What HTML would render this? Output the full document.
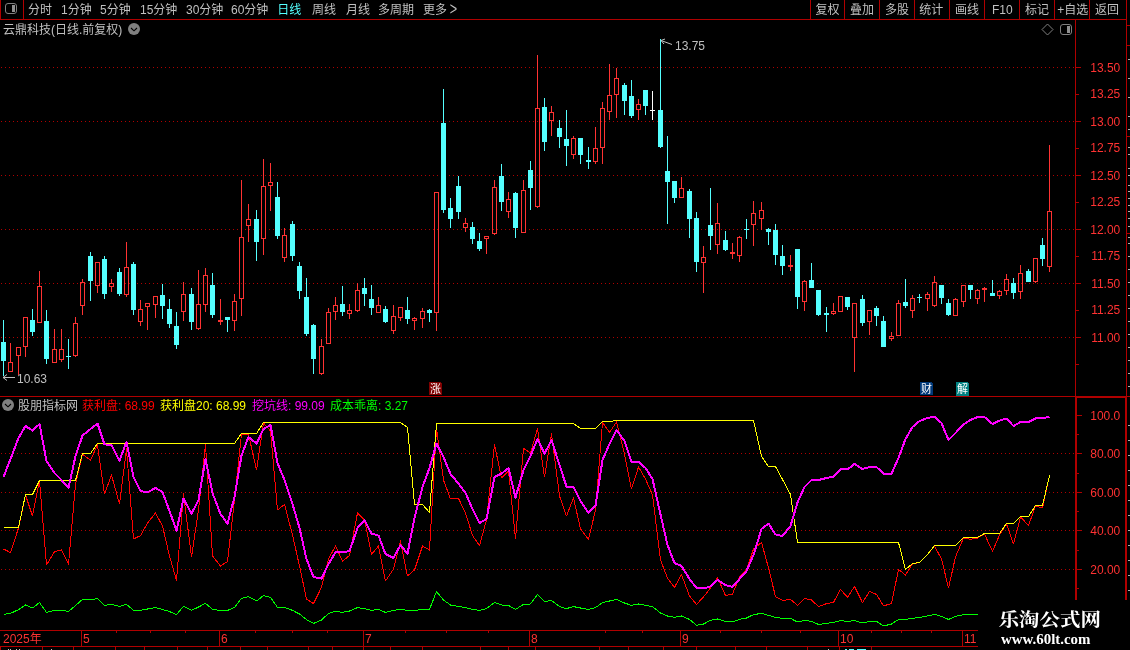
<!DOCTYPE html>
<html lang="zh"><head><meta charset="utf-8"><title>云鼎科技 日线</title>
<style>
html,body{margin:0;padding:0;background:#000}
body{width:1130px;height:650px;overflow:hidden;position:relative}
svg{position:absolute;left:0;top:0;display:block;will-change:transform}
text{font-family:"Liberation Sans","Noto Sans CJK SC",sans-serif;font-size:12px}
.cj{font-family:"Liberation Sans","Noto Sans CJK SC",sans-serif;font-size:12px;fill:#c0c0c0}
.ax{fill:#ff3232;font-size:12px}
.wm{font-family:"Liberation Serif","Noto Serif CJK SC",serif;font-weight:bold;fill:#fff}
</style></head><body>
<svg width="1130" height="650" viewBox="0 0 1130 650">
<rect width="1130" height="650" fill="#000"/>
<path shape-rendering="crispEdges" fill="#b00000" d="M1 67h1v1h-1zM5 67h1v1h-1zM9 67h1v1h-1zM13 67h1v1h-1zM17 67h1v1h-1zM21 67h1v1h-1zM25 67h1v1h-1zM29 67h1v1h-1zM33 67h1v1h-1zM37 67h1v1h-1zM41 67h1v1h-1zM45 67h1v1h-1zM49 67h1v1h-1zM53 67h1v1h-1zM57 67h1v1h-1zM61 67h1v1h-1zM65 67h1v1h-1zM69 67h1v1h-1zM73 67h1v1h-1zM77 67h1v1h-1zM81 67h1v1h-1zM85 67h1v1h-1zM89 67h1v1h-1zM93 67h1v1h-1zM97 67h1v1h-1zM101 67h1v1h-1zM105 67h1v1h-1zM109 67h1v1h-1zM113 67h1v1h-1zM117 67h1v1h-1zM121 67h1v1h-1zM125 67h1v1h-1zM129 67h1v1h-1zM133 67h1v1h-1zM137 67h1v1h-1zM141 67h1v1h-1zM145 67h1v1h-1zM149 67h1v1h-1zM153 67h1v1h-1zM157 67h1v1h-1zM161 67h1v1h-1zM165 67h1v1h-1zM169 67h1v1h-1zM173 67h1v1h-1zM177 67h1v1h-1zM181 67h1v1h-1zM185 67h1v1h-1zM189 67h1v1h-1zM193 67h1v1h-1zM197 67h1v1h-1zM201 67h1v1h-1zM205 67h1v1h-1zM209 67h1v1h-1zM213 67h1v1h-1zM217 67h1v1h-1zM221 67h1v1h-1zM225 67h1v1h-1zM229 67h1v1h-1zM233 67h1v1h-1zM237 67h1v1h-1zM241 67h1v1h-1zM245 67h1v1h-1zM249 67h1v1h-1zM253 67h1v1h-1zM257 67h1v1h-1zM261 67h1v1h-1zM265 67h1v1h-1zM269 67h1v1h-1zM273 67h1v1h-1zM277 67h1v1h-1zM281 67h1v1h-1zM285 67h1v1h-1zM289 67h1v1h-1zM293 67h1v1h-1zM297 67h1v1h-1zM301 67h1v1h-1zM305 67h1v1h-1zM309 67h1v1h-1zM313 67h1v1h-1zM317 67h1v1h-1zM321 67h1v1h-1zM325 67h1v1h-1zM329 67h1v1h-1zM333 67h1v1h-1zM337 67h1v1h-1zM341 67h1v1h-1zM345 67h1v1h-1zM349 67h1v1h-1zM353 67h1v1h-1zM357 67h1v1h-1zM361 67h1v1h-1zM365 67h1v1h-1zM369 67h1v1h-1zM373 67h1v1h-1zM377 67h1v1h-1zM381 67h1v1h-1zM385 67h1v1h-1zM389 67h1v1h-1zM393 67h1v1h-1zM397 67h1v1h-1zM401 67h1v1h-1zM405 67h1v1h-1zM409 67h1v1h-1zM413 67h1v1h-1zM417 67h1v1h-1zM421 67h1v1h-1zM425 67h1v1h-1zM429 67h1v1h-1zM433 67h1v1h-1zM437 67h1v1h-1zM441 67h1v1h-1zM445 67h1v1h-1zM449 67h1v1h-1zM453 67h1v1h-1zM457 67h1v1h-1zM461 67h1v1h-1zM465 67h1v1h-1zM469 67h1v1h-1zM473 67h1v1h-1zM477 67h1v1h-1zM481 67h1v1h-1zM485 67h1v1h-1zM489 67h1v1h-1zM493 67h1v1h-1zM497 67h1v1h-1zM501 67h1v1h-1zM505 67h1v1h-1zM509 67h1v1h-1zM513 67h1v1h-1zM517 67h1v1h-1zM521 67h1v1h-1zM525 67h1v1h-1zM529 67h1v1h-1zM533 67h1v1h-1zM537 67h1v1h-1zM541 67h1v1h-1zM545 67h1v1h-1zM549 67h1v1h-1zM553 67h1v1h-1zM557 67h1v1h-1zM561 67h1v1h-1zM565 67h1v1h-1zM569 67h1v1h-1zM573 67h1v1h-1zM577 67h1v1h-1zM581 67h1v1h-1zM585 67h1v1h-1zM589 67h1v1h-1zM593 67h1v1h-1zM597 67h1v1h-1zM601 67h1v1h-1zM605 67h1v1h-1zM609 67h1v1h-1zM613 67h1v1h-1zM617 67h1v1h-1zM621 67h1v1h-1zM625 67h1v1h-1zM629 67h1v1h-1zM633 67h1v1h-1zM637 67h1v1h-1zM641 67h1v1h-1zM645 67h1v1h-1zM649 67h1v1h-1zM653 67h1v1h-1zM657 67h1v1h-1zM661 67h1v1h-1zM665 67h1v1h-1zM669 67h1v1h-1zM673 67h1v1h-1zM677 67h1v1h-1zM681 67h1v1h-1zM685 67h1v1h-1zM689 67h1v1h-1zM693 67h1v1h-1zM697 67h1v1h-1zM701 67h1v1h-1zM705 67h1v1h-1zM709 67h1v1h-1zM713 67h1v1h-1zM717 67h1v1h-1zM721 67h1v1h-1zM725 67h1v1h-1zM729 67h1v1h-1zM733 67h1v1h-1zM737 67h1v1h-1zM741 67h1v1h-1zM745 67h1v1h-1zM749 67h1v1h-1zM753 67h1v1h-1zM757 67h1v1h-1zM761 67h1v1h-1zM765 67h1v1h-1zM769 67h1v1h-1zM773 67h1v1h-1zM777 67h1v1h-1zM781 67h1v1h-1zM785 67h1v1h-1zM789 67h1v1h-1zM793 67h1v1h-1zM797 67h1v1h-1zM801 67h1v1h-1zM805 67h1v1h-1zM809 67h1v1h-1zM813 67h1v1h-1zM817 67h1v1h-1zM821 67h1v1h-1zM825 67h1v1h-1zM829 67h1v1h-1zM833 67h1v1h-1zM837 67h1v1h-1zM841 67h1v1h-1zM845 67h1v1h-1zM849 67h1v1h-1zM853 67h1v1h-1zM857 67h1v1h-1zM861 67h1v1h-1zM865 67h1v1h-1zM869 67h1v1h-1zM873 67h1v1h-1zM877 67h1v1h-1zM881 67h1v1h-1zM885 67h1v1h-1zM889 67h1v1h-1zM893 67h1v1h-1zM897 67h1v1h-1zM901 67h1v1h-1zM905 67h1v1h-1zM909 67h1v1h-1zM913 67h1v1h-1zM917 67h1v1h-1zM921 67h1v1h-1zM925 67h1v1h-1zM929 67h1v1h-1zM933 67h1v1h-1zM937 67h1v1h-1zM941 67h1v1h-1zM945 67h1v1h-1zM949 67h1v1h-1zM953 67h1v1h-1zM957 67h1v1h-1zM961 67h1v1h-1zM965 67h1v1h-1zM969 67h1v1h-1zM973 67h1v1h-1zM977 67h1v1h-1zM981 67h1v1h-1zM985 67h1v1h-1zM989 67h1v1h-1zM993 67h1v1h-1zM997 67h1v1h-1zM1001 67h1v1h-1zM1005 67h1v1h-1zM1009 67h1v1h-1zM1013 67h1v1h-1zM1017 67h1v1h-1zM1021 67h1v1h-1zM1025 67h1v1h-1zM1029 67h1v1h-1zM1033 67h1v1h-1zM1037 67h1v1h-1zM1041 67h1v1h-1zM1045 67h1v1h-1zM1049 67h1v1h-1zM1053 67h1v1h-1zM1057 67h1v1h-1zM1061 67h1v1h-1zM1065 67h1v1h-1zM1069 67h1v1h-1zM1073 67h1v1h-1zM1 121h1v1h-1zM5 121h1v1h-1zM9 121h1v1h-1zM13 121h1v1h-1zM17 121h1v1h-1zM21 121h1v1h-1zM25 121h1v1h-1zM29 121h1v1h-1zM33 121h1v1h-1zM37 121h1v1h-1zM41 121h1v1h-1zM45 121h1v1h-1zM49 121h1v1h-1zM53 121h1v1h-1zM57 121h1v1h-1zM61 121h1v1h-1zM65 121h1v1h-1zM69 121h1v1h-1zM73 121h1v1h-1zM77 121h1v1h-1zM81 121h1v1h-1zM85 121h1v1h-1zM89 121h1v1h-1zM93 121h1v1h-1zM97 121h1v1h-1zM101 121h1v1h-1zM105 121h1v1h-1zM109 121h1v1h-1zM113 121h1v1h-1zM117 121h1v1h-1zM121 121h1v1h-1zM125 121h1v1h-1zM129 121h1v1h-1zM133 121h1v1h-1zM137 121h1v1h-1zM141 121h1v1h-1zM145 121h1v1h-1zM149 121h1v1h-1zM153 121h1v1h-1zM157 121h1v1h-1zM161 121h1v1h-1zM165 121h1v1h-1zM169 121h1v1h-1zM173 121h1v1h-1zM177 121h1v1h-1zM181 121h1v1h-1zM185 121h1v1h-1zM189 121h1v1h-1zM193 121h1v1h-1zM197 121h1v1h-1zM201 121h1v1h-1zM205 121h1v1h-1zM209 121h1v1h-1zM213 121h1v1h-1zM217 121h1v1h-1zM221 121h1v1h-1zM225 121h1v1h-1zM229 121h1v1h-1zM233 121h1v1h-1zM237 121h1v1h-1zM241 121h1v1h-1zM245 121h1v1h-1zM249 121h1v1h-1zM253 121h1v1h-1zM257 121h1v1h-1zM261 121h1v1h-1zM265 121h1v1h-1zM269 121h1v1h-1zM273 121h1v1h-1zM277 121h1v1h-1zM281 121h1v1h-1zM285 121h1v1h-1zM289 121h1v1h-1zM293 121h1v1h-1zM297 121h1v1h-1zM301 121h1v1h-1zM305 121h1v1h-1zM309 121h1v1h-1zM313 121h1v1h-1zM317 121h1v1h-1zM321 121h1v1h-1zM325 121h1v1h-1zM329 121h1v1h-1zM333 121h1v1h-1zM337 121h1v1h-1zM341 121h1v1h-1zM345 121h1v1h-1zM349 121h1v1h-1zM353 121h1v1h-1zM357 121h1v1h-1zM361 121h1v1h-1zM365 121h1v1h-1zM369 121h1v1h-1zM373 121h1v1h-1zM377 121h1v1h-1zM381 121h1v1h-1zM385 121h1v1h-1zM389 121h1v1h-1zM393 121h1v1h-1zM397 121h1v1h-1zM401 121h1v1h-1zM405 121h1v1h-1zM409 121h1v1h-1zM413 121h1v1h-1zM417 121h1v1h-1zM421 121h1v1h-1zM425 121h1v1h-1zM429 121h1v1h-1zM433 121h1v1h-1zM437 121h1v1h-1zM441 121h1v1h-1zM445 121h1v1h-1zM449 121h1v1h-1zM453 121h1v1h-1zM457 121h1v1h-1zM461 121h1v1h-1zM465 121h1v1h-1zM469 121h1v1h-1zM473 121h1v1h-1zM477 121h1v1h-1zM481 121h1v1h-1zM485 121h1v1h-1zM489 121h1v1h-1zM493 121h1v1h-1zM497 121h1v1h-1zM501 121h1v1h-1zM505 121h1v1h-1zM509 121h1v1h-1zM513 121h1v1h-1zM517 121h1v1h-1zM521 121h1v1h-1zM525 121h1v1h-1zM529 121h1v1h-1zM533 121h1v1h-1zM537 121h1v1h-1zM541 121h1v1h-1zM545 121h1v1h-1zM549 121h1v1h-1zM553 121h1v1h-1zM557 121h1v1h-1zM561 121h1v1h-1zM565 121h1v1h-1zM569 121h1v1h-1zM573 121h1v1h-1zM577 121h1v1h-1zM581 121h1v1h-1zM585 121h1v1h-1zM589 121h1v1h-1zM593 121h1v1h-1zM597 121h1v1h-1zM601 121h1v1h-1zM605 121h1v1h-1zM609 121h1v1h-1zM613 121h1v1h-1zM617 121h1v1h-1zM621 121h1v1h-1zM625 121h1v1h-1zM629 121h1v1h-1zM633 121h1v1h-1zM637 121h1v1h-1zM641 121h1v1h-1zM645 121h1v1h-1zM649 121h1v1h-1zM653 121h1v1h-1zM657 121h1v1h-1zM661 121h1v1h-1zM665 121h1v1h-1zM669 121h1v1h-1zM673 121h1v1h-1zM677 121h1v1h-1zM681 121h1v1h-1zM685 121h1v1h-1zM689 121h1v1h-1zM693 121h1v1h-1zM697 121h1v1h-1zM701 121h1v1h-1zM705 121h1v1h-1zM709 121h1v1h-1zM713 121h1v1h-1zM717 121h1v1h-1zM721 121h1v1h-1zM725 121h1v1h-1zM729 121h1v1h-1zM733 121h1v1h-1zM737 121h1v1h-1zM741 121h1v1h-1zM745 121h1v1h-1zM749 121h1v1h-1zM753 121h1v1h-1zM757 121h1v1h-1zM761 121h1v1h-1zM765 121h1v1h-1zM769 121h1v1h-1zM773 121h1v1h-1zM777 121h1v1h-1zM781 121h1v1h-1zM785 121h1v1h-1zM789 121h1v1h-1zM793 121h1v1h-1zM797 121h1v1h-1zM801 121h1v1h-1zM805 121h1v1h-1zM809 121h1v1h-1zM813 121h1v1h-1zM817 121h1v1h-1zM821 121h1v1h-1zM825 121h1v1h-1zM829 121h1v1h-1zM833 121h1v1h-1zM837 121h1v1h-1zM841 121h1v1h-1zM845 121h1v1h-1zM849 121h1v1h-1zM853 121h1v1h-1zM857 121h1v1h-1zM861 121h1v1h-1zM865 121h1v1h-1zM869 121h1v1h-1zM873 121h1v1h-1zM877 121h1v1h-1zM881 121h1v1h-1zM885 121h1v1h-1zM889 121h1v1h-1zM893 121h1v1h-1zM897 121h1v1h-1zM901 121h1v1h-1zM905 121h1v1h-1zM909 121h1v1h-1zM913 121h1v1h-1zM917 121h1v1h-1zM921 121h1v1h-1zM925 121h1v1h-1zM929 121h1v1h-1zM933 121h1v1h-1zM937 121h1v1h-1zM941 121h1v1h-1zM945 121h1v1h-1zM949 121h1v1h-1zM953 121h1v1h-1zM957 121h1v1h-1zM961 121h1v1h-1zM965 121h1v1h-1zM969 121h1v1h-1zM973 121h1v1h-1zM977 121h1v1h-1zM981 121h1v1h-1zM985 121h1v1h-1zM989 121h1v1h-1zM993 121h1v1h-1zM997 121h1v1h-1zM1001 121h1v1h-1zM1005 121h1v1h-1zM1009 121h1v1h-1zM1013 121h1v1h-1zM1017 121h1v1h-1zM1021 121h1v1h-1zM1025 121h1v1h-1zM1029 121h1v1h-1zM1033 121h1v1h-1zM1037 121h1v1h-1zM1041 121h1v1h-1zM1045 121h1v1h-1zM1049 121h1v1h-1zM1053 121h1v1h-1zM1057 121h1v1h-1zM1061 121h1v1h-1zM1065 121h1v1h-1zM1069 121h1v1h-1zM1073 121h1v1h-1zM1 175h1v1h-1zM5 175h1v1h-1zM9 175h1v1h-1zM13 175h1v1h-1zM17 175h1v1h-1zM21 175h1v1h-1zM25 175h1v1h-1zM29 175h1v1h-1zM33 175h1v1h-1zM37 175h1v1h-1zM41 175h1v1h-1zM45 175h1v1h-1zM49 175h1v1h-1zM53 175h1v1h-1zM57 175h1v1h-1zM61 175h1v1h-1zM65 175h1v1h-1zM69 175h1v1h-1zM73 175h1v1h-1zM77 175h1v1h-1zM81 175h1v1h-1zM85 175h1v1h-1zM89 175h1v1h-1zM93 175h1v1h-1zM97 175h1v1h-1zM101 175h1v1h-1zM105 175h1v1h-1zM109 175h1v1h-1zM113 175h1v1h-1zM117 175h1v1h-1zM121 175h1v1h-1zM125 175h1v1h-1zM129 175h1v1h-1zM133 175h1v1h-1zM137 175h1v1h-1zM141 175h1v1h-1zM145 175h1v1h-1zM149 175h1v1h-1zM153 175h1v1h-1zM157 175h1v1h-1zM161 175h1v1h-1zM165 175h1v1h-1zM169 175h1v1h-1zM173 175h1v1h-1zM177 175h1v1h-1zM181 175h1v1h-1zM185 175h1v1h-1zM189 175h1v1h-1zM193 175h1v1h-1zM197 175h1v1h-1zM201 175h1v1h-1zM205 175h1v1h-1zM209 175h1v1h-1zM213 175h1v1h-1zM217 175h1v1h-1zM221 175h1v1h-1zM225 175h1v1h-1zM229 175h1v1h-1zM233 175h1v1h-1zM237 175h1v1h-1zM241 175h1v1h-1zM245 175h1v1h-1zM249 175h1v1h-1zM253 175h1v1h-1zM257 175h1v1h-1zM261 175h1v1h-1zM265 175h1v1h-1zM269 175h1v1h-1zM273 175h1v1h-1zM277 175h1v1h-1zM281 175h1v1h-1zM285 175h1v1h-1zM289 175h1v1h-1zM293 175h1v1h-1zM297 175h1v1h-1zM301 175h1v1h-1zM305 175h1v1h-1zM309 175h1v1h-1zM313 175h1v1h-1zM317 175h1v1h-1zM321 175h1v1h-1zM325 175h1v1h-1zM329 175h1v1h-1zM333 175h1v1h-1zM337 175h1v1h-1zM341 175h1v1h-1zM345 175h1v1h-1zM349 175h1v1h-1zM353 175h1v1h-1zM357 175h1v1h-1zM361 175h1v1h-1zM365 175h1v1h-1zM369 175h1v1h-1zM373 175h1v1h-1zM377 175h1v1h-1zM381 175h1v1h-1zM385 175h1v1h-1zM389 175h1v1h-1zM393 175h1v1h-1zM397 175h1v1h-1zM401 175h1v1h-1zM405 175h1v1h-1zM409 175h1v1h-1zM413 175h1v1h-1zM417 175h1v1h-1zM421 175h1v1h-1zM425 175h1v1h-1zM429 175h1v1h-1zM433 175h1v1h-1zM437 175h1v1h-1zM441 175h1v1h-1zM445 175h1v1h-1zM449 175h1v1h-1zM453 175h1v1h-1zM457 175h1v1h-1zM461 175h1v1h-1zM465 175h1v1h-1zM469 175h1v1h-1zM473 175h1v1h-1zM477 175h1v1h-1zM481 175h1v1h-1zM485 175h1v1h-1zM489 175h1v1h-1zM493 175h1v1h-1zM497 175h1v1h-1zM501 175h1v1h-1zM505 175h1v1h-1zM509 175h1v1h-1zM513 175h1v1h-1zM517 175h1v1h-1zM521 175h1v1h-1zM525 175h1v1h-1zM529 175h1v1h-1zM533 175h1v1h-1zM537 175h1v1h-1zM541 175h1v1h-1zM545 175h1v1h-1zM549 175h1v1h-1zM553 175h1v1h-1zM557 175h1v1h-1zM561 175h1v1h-1zM565 175h1v1h-1zM569 175h1v1h-1zM573 175h1v1h-1zM577 175h1v1h-1zM581 175h1v1h-1zM585 175h1v1h-1zM589 175h1v1h-1zM593 175h1v1h-1zM597 175h1v1h-1zM601 175h1v1h-1zM605 175h1v1h-1zM609 175h1v1h-1zM613 175h1v1h-1zM617 175h1v1h-1zM621 175h1v1h-1zM625 175h1v1h-1zM629 175h1v1h-1zM633 175h1v1h-1zM637 175h1v1h-1zM641 175h1v1h-1zM645 175h1v1h-1zM649 175h1v1h-1zM653 175h1v1h-1zM657 175h1v1h-1zM661 175h1v1h-1zM665 175h1v1h-1zM669 175h1v1h-1zM673 175h1v1h-1zM677 175h1v1h-1zM681 175h1v1h-1zM685 175h1v1h-1zM689 175h1v1h-1zM693 175h1v1h-1zM697 175h1v1h-1zM701 175h1v1h-1zM705 175h1v1h-1zM709 175h1v1h-1zM713 175h1v1h-1zM717 175h1v1h-1zM721 175h1v1h-1zM725 175h1v1h-1zM729 175h1v1h-1zM733 175h1v1h-1zM737 175h1v1h-1zM741 175h1v1h-1zM745 175h1v1h-1zM749 175h1v1h-1zM753 175h1v1h-1zM757 175h1v1h-1zM761 175h1v1h-1zM765 175h1v1h-1zM769 175h1v1h-1zM773 175h1v1h-1zM777 175h1v1h-1zM781 175h1v1h-1zM785 175h1v1h-1zM789 175h1v1h-1zM793 175h1v1h-1zM797 175h1v1h-1zM801 175h1v1h-1zM805 175h1v1h-1zM809 175h1v1h-1zM813 175h1v1h-1zM817 175h1v1h-1zM821 175h1v1h-1zM825 175h1v1h-1zM829 175h1v1h-1zM833 175h1v1h-1zM837 175h1v1h-1zM841 175h1v1h-1zM845 175h1v1h-1zM849 175h1v1h-1zM853 175h1v1h-1zM857 175h1v1h-1zM861 175h1v1h-1zM865 175h1v1h-1zM869 175h1v1h-1zM873 175h1v1h-1zM877 175h1v1h-1zM881 175h1v1h-1zM885 175h1v1h-1zM889 175h1v1h-1zM893 175h1v1h-1zM897 175h1v1h-1zM901 175h1v1h-1zM905 175h1v1h-1zM909 175h1v1h-1zM913 175h1v1h-1zM917 175h1v1h-1zM921 175h1v1h-1zM925 175h1v1h-1zM929 175h1v1h-1zM933 175h1v1h-1zM937 175h1v1h-1zM941 175h1v1h-1zM945 175h1v1h-1zM949 175h1v1h-1zM953 175h1v1h-1zM957 175h1v1h-1zM961 175h1v1h-1zM965 175h1v1h-1zM969 175h1v1h-1zM973 175h1v1h-1zM977 175h1v1h-1zM981 175h1v1h-1zM985 175h1v1h-1zM989 175h1v1h-1zM993 175h1v1h-1zM997 175h1v1h-1zM1001 175h1v1h-1zM1005 175h1v1h-1zM1009 175h1v1h-1zM1013 175h1v1h-1zM1017 175h1v1h-1zM1021 175h1v1h-1zM1025 175h1v1h-1zM1029 175h1v1h-1zM1033 175h1v1h-1zM1037 175h1v1h-1zM1041 175h1v1h-1zM1045 175h1v1h-1zM1049 175h1v1h-1zM1053 175h1v1h-1zM1057 175h1v1h-1zM1061 175h1v1h-1zM1065 175h1v1h-1zM1069 175h1v1h-1zM1073 175h1v1h-1zM1 229h1v1h-1zM5 229h1v1h-1zM9 229h1v1h-1zM13 229h1v1h-1zM17 229h1v1h-1zM21 229h1v1h-1zM25 229h1v1h-1zM29 229h1v1h-1zM33 229h1v1h-1zM37 229h1v1h-1zM41 229h1v1h-1zM45 229h1v1h-1zM49 229h1v1h-1zM53 229h1v1h-1zM57 229h1v1h-1zM61 229h1v1h-1zM65 229h1v1h-1zM69 229h1v1h-1zM73 229h1v1h-1zM77 229h1v1h-1zM81 229h1v1h-1zM85 229h1v1h-1zM89 229h1v1h-1zM93 229h1v1h-1zM97 229h1v1h-1zM101 229h1v1h-1zM105 229h1v1h-1zM109 229h1v1h-1zM113 229h1v1h-1zM117 229h1v1h-1zM121 229h1v1h-1zM125 229h1v1h-1zM129 229h1v1h-1zM133 229h1v1h-1zM137 229h1v1h-1zM141 229h1v1h-1zM145 229h1v1h-1zM149 229h1v1h-1zM153 229h1v1h-1zM157 229h1v1h-1zM161 229h1v1h-1zM165 229h1v1h-1zM169 229h1v1h-1zM173 229h1v1h-1zM177 229h1v1h-1zM181 229h1v1h-1zM185 229h1v1h-1zM189 229h1v1h-1zM193 229h1v1h-1zM197 229h1v1h-1zM201 229h1v1h-1zM205 229h1v1h-1zM209 229h1v1h-1zM213 229h1v1h-1zM217 229h1v1h-1zM221 229h1v1h-1zM225 229h1v1h-1zM229 229h1v1h-1zM233 229h1v1h-1zM237 229h1v1h-1zM241 229h1v1h-1zM245 229h1v1h-1zM249 229h1v1h-1zM253 229h1v1h-1zM257 229h1v1h-1zM261 229h1v1h-1zM265 229h1v1h-1zM269 229h1v1h-1zM273 229h1v1h-1zM277 229h1v1h-1zM281 229h1v1h-1zM285 229h1v1h-1zM289 229h1v1h-1zM293 229h1v1h-1zM297 229h1v1h-1zM301 229h1v1h-1zM305 229h1v1h-1zM309 229h1v1h-1zM313 229h1v1h-1zM317 229h1v1h-1zM321 229h1v1h-1zM325 229h1v1h-1zM329 229h1v1h-1zM333 229h1v1h-1zM337 229h1v1h-1zM341 229h1v1h-1zM345 229h1v1h-1zM349 229h1v1h-1zM353 229h1v1h-1zM357 229h1v1h-1zM361 229h1v1h-1zM365 229h1v1h-1zM369 229h1v1h-1zM373 229h1v1h-1zM377 229h1v1h-1zM381 229h1v1h-1zM385 229h1v1h-1zM389 229h1v1h-1zM393 229h1v1h-1zM397 229h1v1h-1zM401 229h1v1h-1zM405 229h1v1h-1zM409 229h1v1h-1zM413 229h1v1h-1zM417 229h1v1h-1zM421 229h1v1h-1zM425 229h1v1h-1zM429 229h1v1h-1zM433 229h1v1h-1zM437 229h1v1h-1zM441 229h1v1h-1zM445 229h1v1h-1zM449 229h1v1h-1zM453 229h1v1h-1zM457 229h1v1h-1zM461 229h1v1h-1zM465 229h1v1h-1zM469 229h1v1h-1zM473 229h1v1h-1zM477 229h1v1h-1zM481 229h1v1h-1zM485 229h1v1h-1zM489 229h1v1h-1zM493 229h1v1h-1zM497 229h1v1h-1zM501 229h1v1h-1zM505 229h1v1h-1zM509 229h1v1h-1zM513 229h1v1h-1zM517 229h1v1h-1zM521 229h1v1h-1zM525 229h1v1h-1zM529 229h1v1h-1zM533 229h1v1h-1zM537 229h1v1h-1zM541 229h1v1h-1zM545 229h1v1h-1zM549 229h1v1h-1zM553 229h1v1h-1zM557 229h1v1h-1zM561 229h1v1h-1zM565 229h1v1h-1zM569 229h1v1h-1zM573 229h1v1h-1zM577 229h1v1h-1zM581 229h1v1h-1zM585 229h1v1h-1zM589 229h1v1h-1zM593 229h1v1h-1zM597 229h1v1h-1zM601 229h1v1h-1zM605 229h1v1h-1zM609 229h1v1h-1zM613 229h1v1h-1zM617 229h1v1h-1zM621 229h1v1h-1zM625 229h1v1h-1zM629 229h1v1h-1zM633 229h1v1h-1zM637 229h1v1h-1zM641 229h1v1h-1zM645 229h1v1h-1zM649 229h1v1h-1zM653 229h1v1h-1zM657 229h1v1h-1zM661 229h1v1h-1zM665 229h1v1h-1zM669 229h1v1h-1zM673 229h1v1h-1zM677 229h1v1h-1zM681 229h1v1h-1zM685 229h1v1h-1zM689 229h1v1h-1zM693 229h1v1h-1zM697 229h1v1h-1zM701 229h1v1h-1zM705 229h1v1h-1zM709 229h1v1h-1zM713 229h1v1h-1zM717 229h1v1h-1zM721 229h1v1h-1zM725 229h1v1h-1zM729 229h1v1h-1zM733 229h1v1h-1zM737 229h1v1h-1zM741 229h1v1h-1zM745 229h1v1h-1zM749 229h1v1h-1zM753 229h1v1h-1zM757 229h1v1h-1zM761 229h1v1h-1zM765 229h1v1h-1zM769 229h1v1h-1zM773 229h1v1h-1zM777 229h1v1h-1zM781 229h1v1h-1zM785 229h1v1h-1zM789 229h1v1h-1zM793 229h1v1h-1zM797 229h1v1h-1zM801 229h1v1h-1zM805 229h1v1h-1zM809 229h1v1h-1zM813 229h1v1h-1zM817 229h1v1h-1zM821 229h1v1h-1zM825 229h1v1h-1zM829 229h1v1h-1zM833 229h1v1h-1zM837 229h1v1h-1zM841 229h1v1h-1zM845 229h1v1h-1zM849 229h1v1h-1zM853 229h1v1h-1zM857 229h1v1h-1zM861 229h1v1h-1zM865 229h1v1h-1zM869 229h1v1h-1zM873 229h1v1h-1zM877 229h1v1h-1zM881 229h1v1h-1zM885 229h1v1h-1zM889 229h1v1h-1zM893 229h1v1h-1zM897 229h1v1h-1zM901 229h1v1h-1zM905 229h1v1h-1zM909 229h1v1h-1zM913 229h1v1h-1zM917 229h1v1h-1zM921 229h1v1h-1zM925 229h1v1h-1zM929 229h1v1h-1zM933 229h1v1h-1zM937 229h1v1h-1zM941 229h1v1h-1zM945 229h1v1h-1zM949 229h1v1h-1zM953 229h1v1h-1zM957 229h1v1h-1zM961 229h1v1h-1zM965 229h1v1h-1zM969 229h1v1h-1zM973 229h1v1h-1zM977 229h1v1h-1zM981 229h1v1h-1zM985 229h1v1h-1zM989 229h1v1h-1zM993 229h1v1h-1zM997 229h1v1h-1zM1001 229h1v1h-1zM1005 229h1v1h-1zM1009 229h1v1h-1zM1013 229h1v1h-1zM1017 229h1v1h-1zM1021 229h1v1h-1zM1025 229h1v1h-1zM1029 229h1v1h-1zM1033 229h1v1h-1zM1037 229h1v1h-1zM1041 229h1v1h-1zM1045 229h1v1h-1zM1049 229h1v1h-1zM1053 229h1v1h-1zM1057 229h1v1h-1zM1061 229h1v1h-1zM1065 229h1v1h-1zM1069 229h1v1h-1zM1073 229h1v1h-1zM1 283h1v1h-1zM5 283h1v1h-1zM9 283h1v1h-1zM13 283h1v1h-1zM17 283h1v1h-1zM21 283h1v1h-1zM25 283h1v1h-1zM29 283h1v1h-1zM33 283h1v1h-1zM37 283h1v1h-1zM41 283h1v1h-1zM45 283h1v1h-1zM49 283h1v1h-1zM53 283h1v1h-1zM57 283h1v1h-1zM61 283h1v1h-1zM65 283h1v1h-1zM69 283h1v1h-1zM73 283h1v1h-1zM77 283h1v1h-1zM81 283h1v1h-1zM85 283h1v1h-1zM89 283h1v1h-1zM93 283h1v1h-1zM97 283h1v1h-1zM101 283h1v1h-1zM105 283h1v1h-1zM109 283h1v1h-1zM113 283h1v1h-1zM117 283h1v1h-1zM121 283h1v1h-1zM125 283h1v1h-1zM129 283h1v1h-1zM133 283h1v1h-1zM137 283h1v1h-1zM141 283h1v1h-1zM145 283h1v1h-1zM149 283h1v1h-1zM153 283h1v1h-1zM157 283h1v1h-1zM161 283h1v1h-1zM165 283h1v1h-1zM169 283h1v1h-1zM173 283h1v1h-1zM177 283h1v1h-1zM181 283h1v1h-1zM185 283h1v1h-1zM189 283h1v1h-1zM193 283h1v1h-1zM197 283h1v1h-1zM201 283h1v1h-1zM205 283h1v1h-1zM209 283h1v1h-1zM213 283h1v1h-1zM217 283h1v1h-1zM221 283h1v1h-1zM225 283h1v1h-1zM229 283h1v1h-1zM233 283h1v1h-1zM237 283h1v1h-1zM241 283h1v1h-1zM245 283h1v1h-1zM249 283h1v1h-1zM253 283h1v1h-1zM257 283h1v1h-1zM261 283h1v1h-1zM265 283h1v1h-1zM269 283h1v1h-1zM273 283h1v1h-1zM277 283h1v1h-1zM281 283h1v1h-1zM285 283h1v1h-1zM289 283h1v1h-1zM293 283h1v1h-1zM297 283h1v1h-1zM301 283h1v1h-1zM305 283h1v1h-1zM309 283h1v1h-1zM313 283h1v1h-1zM317 283h1v1h-1zM321 283h1v1h-1zM325 283h1v1h-1zM329 283h1v1h-1zM333 283h1v1h-1zM337 283h1v1h-1zM341 283h1v1h-1zM345 283h1v1h-1zM349 283h1v1h-1zM353 283h1v1h-1zM357 283h1v1h-1zM361 283h1v1h-1zM365 283h1v1h-1zM369 283h1v1h-1zM373 283h1v1h-1zM377 283h1v1h-1zM381 283h1v1h-1zM385 283h1v1h-1zM389 283h1v1h-1zM393 283h1v1h-1zM397 283h1v1h-1zM401 283h1v1h-1zM405 283h1v1h-1zM409 283h1v1h-1zM413 283h1v1h-1zM417 283h1v1h-1zM421 283h1v1h-1zM425 283h1v1h-1zM429 283h1v1h-1zM433 283h1v1h-1zM437 283h1v1h-1zM441 283h1v1h-1zM445 283h1v1h-1zM449 283h1v1h-1zM453 283h1v1h-1zM457 283h1v1h-1zM461 283h1v1h-1zM465 283h1v1h-1zM469 283h1v1h-1zM473 283h1v1h-1zM477 283h1v1h-1zM481 283h1v1h-1zM485 283h1v1h-1zM489 283h1v1h-1zM493 283h1v1h-1zM497 283h1v1h-1zM501 283h1v1h-1zM505 283h1v1h-1zM509 283h1v1h-1zM513 283h1v1h-1zM517 283h1v1h-1zM521 283h1v1h-1zM525 283h1v1h-1zM529 283h1v1h-1zM533 283h1v1h-1zM537 283h1v1h-1zM541 283h1v1h-1zM545 283h1v1h-1zM549 283h1v1h-1zM553 283h1v1h-1zM557 283h1v1h-1zM561 283h1v1h-1zM565 283h1v1h-1zM569 283h1v1h-1zM573 283h1v1h-1zM577 283h1v1h-1zM581 283h1v1h-1zM585 283h1v1h-1zM589 283h1v1h-1zM593 283h1v1h-1zM597 283h1v1h-1zM601 283h1v1h-1zM605 283h1v1h-1zM609 283h1v1h-1zM613 283h1v1h-1zM617 283h1v1h-1zM621 283h1v1h-1zM625 283h1v1h-1zM629 283h1v1h-1zM633 283h1v1h-1zM637 283h1v1h-1zM641 283h1v1h-1zM645 283h1v1h-1zM649 283h1v1h-1zM653 283h1v1h-1zM657 283h1v1h-1zM661 283h1v1h-1zM665 283h1v1h-1zM669 283h1v1h-1zM673 283h1v1h-1zM677 283h1v1h-1zM681 283h1v1h-1zM685 283h1v1h-1zM689 283h1v1h-1zM693 283h1v1h-1zM697 283h1v1h-1zM701 283h1v1h-1zM705 283h1v1h-1zM709 283h1v1h-1zM713 283h1v1h-1zM717 283h1v1h-1zM721 283h1v1h-1zM725 283h1v1h-1zM729 283h1v1h-1zM733 283h1v1h-1zM737 283h1v1h-1zM741 283h1v1h-1zM745 283h1v1h-1zM749 283h1v1h-1zM753 283h1v1h-1zM757 283h1v1h-1zM761 283h1v1h-1zM765 283h1v1h-1zM769 283h1v1h-1zM773 283h1v1h-1zM777 283h1v1h-1zM781 283h1v1h-1zM785 283h1v1h-1zM789 283h1v1h-1zM793 283h1v1h-1zM797 283h1v1h-1zM801 283h1v1h-1zM805 283h1v1h-1zM809 283h1v1h-1zM813 283h1v1h-1zM817 283h1v1h-1zM821 283h1v1h-1zM825 283h1v1h-1zM829 283h1v1h-1zM833 283h1v1h-1zM837 283h1v1h-1zM841 283h1v1h-1zM845 283h1v1h-1zM849 283h1v1h-1zM853 283h1v1h-1zM857 283h1v1h-1zM861 283h1v1h-1zM865 283h1v1h-1zM869 283h1v1h-1zM873 283h1v1h-1zM877 283h1v1h-1zM881 283h1v1h-1zM885 283h1v1h-1zM889 283h1v1h-1zM893 283h1v1h-1zM897 283h1v1h-1zM901 283h1v1h-1zM905 283h1v1h-1zM909 283h1v1h-1zM913 283h1v1h-1zM917 283h1v1h-1zM921 283h1v1h-1zM925 283h1v1h-1zM929 283h1v1h-1zM933 283h1v1h-1zM937 283h1v1h-1zM941 283h1v1h-1zM945 283h1v1h-1zM949 283h1v1h-1zM953 283h1v1h-1zM957 283h1v1h-1zM961 283h1v1h-1zM965 283h1v1h-1zM969 283h1v1h-1zM973 283h1v1h-1zM977 283h1v1h-1zM981 283h1v1h-1zM985 283h1v1h-1zM989 283h1v1h-1zM993 283h1v1h-1zM997 283h1v1h-1zM1001 283h1v1h-1zM1005 283h1v1h-1zM1009 283h1v1h-1zM1013 283h1v1h-1zM1017 283h1v1h-1zM1021 283h1v1h-1zM1025 283h1v1h-1zM1029 283h1v1h-1zM1033 283h1v1h-1zM1037 283h1v1h-1zM1041 283h1v1h-1zM1045 283h1v1h-1zM1049 283h1v1h-1zM1053 283h1v1h-1zM1057 283h1v1h-1zM1061 283h1v1h-1zM1065 283h1v1h-1zM1069 283h1v1h-1zM1073 283h1v1h-1zM1 337h1v1h-1zM5 337h1v1h-1zM9 337h1v1h-1zM13 337h1v1h-1zM17 337h1v1h-1zM21 337h1v1h-1zM25 337h1v1h-1zM29 337h1v1h-1zM33 337h1v1h-1zM37 337h1v1h-1zM41 337h1v1h-1zM45 337h1v1h-1zM49 337h1v1h-1zM53 337h1v1h-1zM57 337h1v1h-1zM61 337h1v1h-1zM65 337h1v1h-1zM69 337h1v1h-1zM73 337h1v1h-1zM77 337h1v1h-1zM81 337h1v1h-1zM85 337h1v1h-1zM89 337h1v1h-1zM93 337h1v1h-1zM97 337h1v1h-1zM101 337h1v1h-1zM105 337h1v1h-1zM109 337h1v1h-1zM113 337h1v1h-1zM117 337h1v1h-1zM121 337h1v1h-1zM125 337h1v1h-1zM129 337h1v1h-1zM133 337h1v1h-1zM137 337h1v1h-1zM141 337h1v1h-1zM145 337h1v1h-1zM149 337h1v1h-1zM153 337h1v1h-1zM157 337h1v1h-1zM161 337h1v1h-1zM165 337h1v1h-1zM169 337h1v1h-1zM173 337h1v1h-1zM177 337h1v1h-1zM181 337h1v1h-1zM185 337h1v1h-1zM189 337h1v1h-1zM193 337h1v1h-1zM197 337h1v1h-1zM201 337h1v1h-1zM205 337h1v1h-1zM209 337h1v1h-1zM213 337h1v1h-1zM217 337h1v1h-1zM221 337h1v1h-1zM225 337h1v1h-1zM229 337h1v1h-1zM233 337h1v1h-1zM237 337h1v1h-1zM241 337h1v1h-1zM245 337h1v1h-1zM249 337h1v1h-1zM253 337h1v1h-1zM257 337h1v1h-1zM261 337h1v1h-1zM265 337h1v1h-1zM269 337h1v1h-1zM273 337h1v1h-1zM277 337h1v1h-1zM281 337h1v1h-1zM285 337h1v1h-1zM289 337h1v1h-1zM293 337h1v1h-1zM297 337h1v1h-1zM301 337h1v1h-1zM305 337h1v1h-1zM309 337h1v1h-1zM313 337h1v1h-1zM317 337h1v1h-1zM321 337h1v1h-1zM325 337h1v1h-1zM329 337h1v1h-1zM333 337h1v1h-1zM337 337h1v1h-1zM341 337h1v1h-1zM345 337h1v1h-1zM349 337h1v1h-1zM353 337h1v1h-1zM357 337h1v1h-1zM361 337h1v1h-1zM365 337h1v1h-1zM369 337h1v1h-1zM373 337h1v1h-1zM377 337h1v1h-1zM381 337h1v1h-1zM385 337h1v1h-1zM389 337h1v1h-1zM393 337h1v1h-1zM397 337h1v1h-1zM401 337h1v1h-1zM405 337h1v1h-1zM409 337h1v1h-1zM413 337h1v1h-1zM417 337h1v1h-1zM421 337h1v1h-1zM425 337h1v1h-1zM429 337h1v1h-1zM433 337h1v1h-1zM437 337h1v1h-1zM441 337h1v1h-1zM445 337h1v1h-1zM449 337h1v1h-1zM453 337h1v1h-1zM457 337h1v1h-1zM461 337h1v1h-1zM465 337h1v1h-1zM469 337h1v1h-1zM473 337h1v1h-1zM477 337h1v1h-1zM481 337h1v1h-1zM485 337h1v1h-1zM489 337h1v1h-1zM493 337h1v1h-1zM497 337h1v1h-1zM501 337h1v1h-1zM505 337h1v1h-1zM509 337h1v1h-1zM513 337h1v1h-1zM517 337h1v1h-1zM521 337h1v1h-1zM525 337h1v1h-1zM529 337h1v1h-1zM533 337h1v1h-1zM537 337h1v1h-1zM541 337h1v1h-1zM545 337h1v1h-1zM549 337h1v1h-1zM553 337h1v1h-1zM557 337h1v1h-1zM561 337h1v1h-1zM565 337h1v1h-1zM569 337h1v1h-1zM573 337h1v1h-1zM577 337h1v1h-1zM581 337h1v1h-1zM585 337h1v1h-1zM589 337h1v1h-1zM593 337h1v1h-1zM597 337h1v1h-1zM601 337h1v1h-1zM605 337h1v1h-1zM609 337h1v1h-1zM613 337h1v1h-1zM617 337h1v1h-1zM621 337h1v1h-1zM625 337h1v1h-1zM629 337h1v1h-1zM633 337h1v1h-1zM637 337h1v1h-1zM641 337h1v1h-1zM645 337h1v1h-1zM649 337h1v1h-1zM653 337h1v1h-1zM657 337h1v1h-1zM661 337h1v1h-1zM665 337h1v1h-1zM669 337h1v1h-1zM673 337h1v1h-1zM677 337h1v1h-1zM681 337h1v1h-1zM685 337h1v1h-1zM689 337h1v1h-1zM693 337h1v1h-1zM697 337h1v1h-1zM701 337h1v1h-1zM705 337h1v1h-1zM709 337h1v1h-1zM713 337h1v1h-1zM717 337h1v1h-1zM721 337h1v1h-1zM725 337h1v1h-1zM729 337h1v1h-1zM733 337h1v1h-1zM737 337h1v1h-1zM741 337h1v1h-1zM745 337h1v1h-1zM749 337h1v1h-1zM753 337h1v1h-1zM757 337h1v1h-1zM761 337h1v1h-1zM765 337h1v1h-1zM769 337h1v1h-1zM773 337h1v1h-1zM777 337h1v1h-1zM781 337h1v1h-1zM785 337h1v1h-1zM789 337h1v1h-1zM793 337h1v1h-1zM797 337h1v1h-1zM801 337h1v1h-1zM805 337h1v1h-1zM809 337h1v1h-1zM813 337h1v1h-1zM817 337h1v1h-1zM821 337h1v1h-1zM825 337h1v1h-1zM829 337h1v1h-1zM833 337h1v1h-1zM837 337h1v1h-1zM841 337h1v1h-1zM845 337h1v1h-1zM849 337h1v1h-1zM853 337h1v1h-1zM857 337h1v1h-1zM861 337h1v1h-1zM865 337h1v1h-1zM869 337h1v1h-1zM873 337h1v1h-1zM877 337h1v1h-1zM881 337h1v1h-1zM885 337h1v1h-1zM889 337h1v1h-1zM893 337h1v1h-1zM897 337h1v1h-1zM901 337h1v1h-1zM905 337h1v1h-1zM909 337h1v1h-1zM913 337h1v1h-1zM917 337h1v1h-1zM921 337h1v1h-1zM925 337h1v1h-1zM929 337h1v1h-1zM933 337h1v1h-1zM937 337h1v1h-1zM941 337h1v1h-1zM945 337h1v1h-1zM949 337h1v1h-1zM953 337h1v1h-1zM957 337h1v1h-1zM961 337h1v1h-1zM965 337h1v1h-1zM969 337h1v1h-1zM973 337h1v1h-1zM977 337h1v1h-1zM981 337h1v1h-1zM985 337h1v1h-1zM989 337h1v1h-1zM993 337h1v1h-1zM997 337h1v1h-1zM1001 337h1v1h-1zM1005 337h1v1h-1zM1009 337h1v1h-1zM1013 337h1v1h-1zM1017 337h1v1h-1zM1021 337h1v1h-1zM1025 337h1v1h-1zM1029 337h1v1h-1zM1033 337h1v1h-1zM1037 337h1v1h-1zM1041 337h1v1h-1zM1045 337h1v1h-1zM1049 337h1v1h-1zM1053 337h1v1h-1zM1057 337h1v1h-1zM1061 337h1v1h-1zM1065 337h1v1h-1zM1069 337h1v1h-1zM1073 337h1v1h-1zM1 453h1v1h-1zM5 453h1v1h-1zM9 453h1v1h-1zM13 453h1v1h-1zM17 453h1v1h-1zM21 453h1v1h-1zM25 453h1v1h-1zM29 453h1v1h-1zM33 453h1v1h-1zM37 453h1v1h-1zM41 453h1v1h-1zM45 453h1v1h-1zM49 453h1v1h-1zM53 453h1v1h-1zM57 453h1v1h-1zM61 453h1v1h-1zM65 453h1v1h-1zM69 453h1v1h-1zM73 453h1v1h-1zM77 453h1v1h-1zM81 453h1v1h-1zM85 453h1v1h-1zM89 453h1v1h-1zM93 453h1v1h-1zM97 453h1v1h-1zM101 453h1v1h-1zM105 453h1v1h-1zM109 453h1v1h-1zM113 453h1v1h-1zM117 453h1v1h-1zM121 453h1v1h-1zM125 453h1v1h-1zM129 453h1v1h-1zM133 453h1v1h-1zM137 453h1v1h-1zM141 453h1v1h-1zM145 453h1v1h-1zM149 453h1v1h-1zM153 453h1v1h-1zM157 453h1v1h-1zM161 453h1v1h-1zM165 453h1v1h-1zM169 453h1v1h-1zM173 453h1v1h-1zM177 453h1v1h-1zM181 453h1v1h-1zM185 453h1v1h-1zM189 453h1v1h-1zM193 453h1v1h-1zM197 453h1v1h-1zM201 453h1v1h-1zM205 453h1v1h-1zM209 453h1v1h-1zM213 453h1v1h-1zM217 453h1v1h-1zM221 453h1v1h-1zM225 453h1v1h-1zM229 453h1v1h-1zM233 453h1v1h-1zM237 453h1v1h-1zM241 453h1v1h-1zM245 453h1v1h-1zM249 453h1v1h-1zM253 453h1v1h-1zM257 453h1v1h-1zM261 453h1v1h-1zM265 453h1v1h-1zM269 453h1v1h-1zM273 453h1v1h-1zM277 453h1v1h-1zM281 453h1v1h-1zM285 453h1v1h-1zM289 453h1v1h-1zM293 453h1v1h-1zM297 453h1v1h-1zM301 453h1v1h-1zM305 453h1v1h-1zM309 453h1v1h-1zM313 453h1v1h-1zM317 453h1v1h-1zM321 453h1v1h-1zM325 453h1v1h-1zM329 453h1v1h-1zM333 453h1v1h-1zM337 453h1v1h-1zM341 453h1v1h-1zM345 453h1v1h-1zM349 453h1v1h-1zM353 453h1v1h-1zM357 453h1v1h-1zM361 453h1v1h-1zM365 453h1v1h-1zM369 453h1v1h-1zM373 453h1v1h-1zM377 453h1v1h-1zM381 453h1v1h-1zM385 453h1v1h-1zM389 453h1v1h-1zM393 453h1v1h-1zM397 453h1v1h-1zM401 453h1v1h-1zM405 453h1v1h-1zM409 453h1v1h-1zM413 453h1v1h-1zM417 453h1v1h-1zM421 453h1v1h-1zM425 453h1v1h-1zM429 453h1v1h-1zM433 453h1v1h-1zM437 453h1v1h-1zM441 453h1v1h-1zM445 453h1v1h-1zM449 453h1v1h-1zM453 453h1v1h-1zM457 453h1v1h-1zM461 453h1v1h-1zM465 453h1v1h-1zM469 453h1v1h-1zM473 453h1v1h-1zM477 453h1v1h-1zM481 453h1v1h-1zM485 453h1v1h-1zM489 453h1v1h-1zM493 453h1v1h-1zM497 453h1v1h-1zM501 453h1v1h-1zM505 453h1v1h-1zM509 453h1v1h-1zM513 453h1v1h-1zM517 453h1v1h-1zM521 453h1v1h-1zM525 453h1v1h-1zM529 453h1v1h-1zM533 453h1v1h-1zM537 453h1v1h-1zM541 453h1v1h-1zM545 453h1v1h-1zM549 453h1v1h-1zM553 453h1v1h-1zM557 453h1v1h-1zM561 453h1v1h-1zM565 453h1v1h-1zM569 453h1v1h-1zM573 453h1v1h-1zM577 453h1v1h-1zM581 453h1v1h-1zM585 453h1v1h-1zM589 453h1v1h-1zM593 453h1v1h-1zM597 453h1v1h-1zM601 453h1v1h-1zM605 453h1v1h-1zM609 453h1v1h-1zM613 453h1v1h-1zM617 453h1v1h-1zM621 453h1v1h-1zM625 453h1v1h-1zM629 453h1v1h-1zM633 453h1v1h-1zM637 453h1v1h-1zM641 453h1v1h-1zM645 453h1v1h-1zM649 453h1v1h-1zM653 453h1v1h-1zM657 453h1v1h-1zM661 453h1v1h-1zM665 453h1v1h-1zM669 453h1v1h-1zM673 453h1v1h-1zM677 453h1v1h-1zM681 453h1v1h-1zM685 453h1v1h-1zM689 453h1v1h-1zM693 453h1v1h-1zM697 453h1v1h-1zM701 453h1v1h-1zM705 453h1v1h-1zM709 453h1v1h-1zM713 453h1v1h-1zM717 453h1v1h-1zM721 453h1v1h-1zM725 453h1v1h-1zM729 453h1v1h-1zM733 453h1v1h-1zM737 453h1v1h-1zM741 453h1v1h-1zM745 453h1v1h-1zM749 453h1v1h-1zM753 453h1v1h-1zM757 453h1v1h-1zM761 453h1v1h-1zM765 453h1v1h-1zM769 453h1v1h-1zM773 453h1v1h-1zM777 453h1v1h-1zM781 453h1v1h-1zM785 453h1v1h-1zM789 453h1v1h-1zM793 453h1v1h-1zM797 453h1v1h-1zM801 453h1v1h-1zM805 453h1v1h-1zM809 453h1v1h-1zM813 453h1v1h-1zM817 453h1v1h-1zM821 453h1v1h-1zM825 453h1v1h-1zM829 453h1v1h-1zM833 453h1v1h-1zM837 453h1v1h-1zM841 453h1v1h-1zM845 453h1v1h-1zM849 453h1v1h-1zM853 453h1v1h-1zM857 453h1v1h-1zM861 453h1v1h-1zM865 453h1v1h-1zM869 453h1v1h-1zM873 453h1v1h-1zM877 453h1v1h-1zM881 453h1v1h-1zM885 453h1v1h-1zM889 453h1v1h-1zM893 453h1v1h-1zM897 453h1v1h-1zM901 453h1v1h-1zM905 453h1v1h-1zM909 453h1v1h-1zM913 453h1v1h-1zM917 453h1v1h-1zM921 453h1v1h-1zM925 453h1v1h-1zM929 453h1v1h-1zM933 453h1v1h-1zM937 453h1v1h-1zM941 453h1v1h-1zM945 453h1v1h-1zM949 453h1v1h-1zM953 453h1v1h-1zM957 453h1v1h-1zM961 453h1v1h-1zM965 453h1v1h-1zM969 453h1v1h-1zM973 453h1v1h-1zM977 453h1v1h-1zM981 453h1v1h-1zM985 453h1v1h-1zM989 453h1v1h-1zM993 453h1v1h-1zM997 453h1v1h-1zM1001 453h1v1h-1zM1005 453h1v1h-1zM1009 453h1v1h-1zM1013 453h1v1h-1zM1017 453h1v1h-1zM1021 453h1v1h-1zM1025 453h1v1h-1zM1029 453h1v1h-1zM1033 453h1v1h-1zM1037 453h1v1h-1zM1041 453h1v1h-1zM1045 453h1v1h-1zM1049 453h1v1h-1zM1053 453h1v1h-1zM1057 453h1v1h-1zM1061 453h1v1h-1zM1065 453h1v1h-1zM1069 453h1v1h-1zM1073 453h1v1h-1zM1 492h1v1h-1zM5 492h1v1h-1zM9 492h1v1h-1zM13 492h1v1h-1zM17 492h1v1h-1zM21 492h1v1h-1zM25 492h1v1h-1zM29 492h1v1h-1zM33 492h1v1h-1zM37 492h1v1h-1zM41 492h1v1h-1zM45 492h1v1h-1zM49 492h1v1h-1zM53 492h1v1h-1zM57 492h1v1h-1zM61 492h1v1h-1zM65 492h1v1h-1zM69 492h1v1h-1zM73 492h1v1h-1zM77 492h1v1h-1zM81 492h1v1h-1zM85 492h1v1h-1zM89 492h1v1h-1zM93 492h1v1h-1zM97 492h1v1h-1zM101 492h1v1h-1zM105 492h1v1h-1zM109 492h1v1h-1zM113 492h1v1h-1zM117 492h1v1h-1zM121 492h1v1h-1zM125 492h1v1h-1zM129 492h1v1h-1zM133 492h1v1h-1zM137 492h1v1h-1zM141 492h1v1h-1zM145 492h1v1h-1zM149 492h1v1h-1zM153 492h1v1h-1zM157 492h1v1h-1zM161 492h1v1h-1zM165 492h1v1h-1zM169 492h1v1h-1zM173 492h1v1h-1zM177 492h1v1h-1zM181 492h1v1h-1zM185 492h1v1h-1zM189 492h1v1h-1zM193 492h1v1h-1zM197 492h1v1h-1zM201 492h1v1h-1zM205 492h1v1h-1zM209 492h1v1h-1zM213 492h1v1h-1zM217 492h1v1h-1zM221 492h1v1h-1zM225 492h1v1h-1zM229 492h1v1h-1zM233 492h1v1h-1zM237 492h1v1h-1zM241 492h1v1h-1zM245 492h1v1h-1zM249 492h1v1h-1zM253 492h1v1h-1zM257 492h1v1h-1zM261 492h1v1h-1zM265 492h1v1h-1zM269 492h1v1h-1zM273 492h1v1h-1zM277 492h1v1h-1zM281 492h1v1h-1zM285 492h1v1h-1zM289 492h1v1h-1zM293 492h1v1h-1zM297 492h1v1h-1zM301 492h1v1h-1zM305 492h1v1h-1zM309 492h1v1h-1zM313 492h1v1h-1zM317 492h1v1h-1zM321 492h1v1h-1zM325 492h1v1h-1zM329 492h1v1h-1zM333 492h1v1h-1zM337 492h1v1h-1zM341 492h1v1h-1zM345 492h1v1h-1zM349 492h1v1h-1zM353 492h1v1h-1zM357 492h1v1h-1zM361 492h1v1h-1zM365 492h1v1h-1zM369 492h1v1h-1zM373 492h1v1h-1zM377 492h1v1h-1zM381 492h1v1h-1zM385 492h1v1h-1zM389 492h1v1h-1zM393 492h1v1h-1zM397 492h1v1h-1zM401 492h1v1h-1zM405 492h1v1h-1zM409 492h1v1h-1zM413 492h1v1h-1zM417 492h1v1h-1zM421 492h1v1h-1zM425 492h1v1h-1zM429 492h1v1h-1zM433 492h1v1h-1zM437 492h1v1h-1zM441 492h1v1h-1zM445 492h1v1h-1zM449 492h1v1h-1zM453 492h1v1h-1zM457 492h1v1h-1zM461 492h1v1h-1zM465 492h1v1h-1zM469 492h1v1h-1zM473 492h1v1h-1zM477 492h1v1h-1zM481 492h1v1h-1zM485 492h1v1h-1zM489 492h1v1h-1zM493 492h1v1h-1zM497 492h1v1h-1zM501 492h1v1h-1zM505 492h1v1h-1zM509 492h1v1h-1zM513 492h1v1h-1zM517 492h1v1h-1zM521 492h1v1h-1zM525 492h1v1h-1zM529 492h1v1h-1zM533 492h1v1h-1zM537 492h1v1h-1zM541 492h1v1h-1zM545 492h1v1h-1zM549 492h1v1h-1zM553 492h1v1h-1zM557 492h1v1h-1zM561 492h1v1h-1zM565 492h1v1h-1zM569 492h1v1h-1zM573 492h1v1h-1zM577 492h1v1h-1zM581 492h1v1h-1zM585 492h1v1h-1zM589 492h1v1h-1zM593 492h1v1h-1zM597 492h1v1h-1zM601 492h1v1h-1zM605 492h1v1h-1zM609 492h1v1h-1zM613 492h1v1h-1zM617 492h1v1h-1zM621 492h1v1h-1zM625 492h1v1h-1zM629 492h1v1h-1zM633 492h1v1h-1zM637 492h1v1h-1zM641 492h1v1h-1zM645 492h1v1h-1zM649 492h1v1h-1zM653 492h1v1h-1zM657 492h1v1h-1zM661 492h1v1h-1zM665 492h1v1h-1zM669 492h1v1h-1zM673 492h1v1h-1zM677 492h1v1h-1zM681 492h1v1h-1zM685 492h1v1h-1zM689 492h1v1h-1zM693 492h1v1h-1zM697 492h1v1h-1zM701 492h1v1h-1zM705 492h1v1h-1zM709 492h1v1h-1zM713 492h1v1h-1zM717 492h1v1h-1zM721 492h1v1h-1zM725 492h1v1h-1zM729 492h1v1h-1zM733 492h1v1h-1zM737 492h1v1h-1zM741 492h1v1h-1zM745 492h1v1h-1zM749 492h1v1h-1zM753 492h1v1h-1zM757 492h1v1h-1zM761 492h1v1h-1zM765 492h1v1h-1zM769 492h1v1h-1zM773 492h1v1h-1zM777 492h1v1h-1zM781 492h1v1h-1zM785 492h1v1h-1zM789 492h1v1h-1zM793 492h1v1h-1zM797 492h1v1h-1zM801 492h1v1h-1zM805 492h1v1h-1zM809 492h1v1h-1zM813 492h1v1h-1zM817 492h1v1h-1zM821 492h1v1h-1zM825 492h1v1h-1zM829 492h1v1h-1zM833 492h1v1h-1zM837 492h1v1h-1zM841 492h1v1h-1zM845 492h1v1h-1zM849 492h1v1h-1zM853 492h1v1h-1zM857 492h1v1h-1zM861 492h1v1h-1zM865 492h1v1h-1zM869 492h1v1h-1zM873 492h1v1h-1zM877 492h1v1h-1zM881 492h1v1h-1zM885 492h1v1h-1zM889 492h1v1h-1zM893 492h1v1h-1zM897 492h1v1h-1zM901 492h1v1h-1zM905 492h1v1h-1zM909 492h1v1h-1zM913 492h1v1h-1zM917 492h1v1h-1zM921 492h1v1h-1zM925 492h1v1h-1zM929 492h1v1h-1zM933 492h1v1h-1zM937 492h1v1h-1zM941 492h1v1h-1zM945 492h1v1h-1zM949 492h1v1h-1zM953 492h1v1h-1zM957 492h1v1h-1zM961 492h1v1h-1zM965 492h1v1h-1zM969 492h1v1h-1zM973 492h1v1h-1zM977 492h1v1h-1zM981 492h1v1h-1zM985 492h1v1h-1zM989 492h1v1h-1zM993 492h1v1h-1zM997 492h1v1h-1zM1001 492h1v1h-1zM1005 492h1v1h-1zM1009 492h1v1h-1zM1013 492h1v1h-1zM1017 492h1v1h-1zM1021 492h1v1h-1zM1025 492h1v1h-1zM1029 492h1v1h-1zM1033 492h1v1h-1zM1037 492h1v1h-1zM1041 492h1v1h-1zM1045 492h1v1h-1zM1049 492h1v1h-1zM1053 492h1v1h-1zM1057 492h1v1h-1zM1061 492h1v1h-1zM1065 492h1v1h-1zM1069 492h1v1h-1zM1073 492h1v1h-1zM1 530h1v1h-1zM5 530h1v1h-1zM9 530h1v1h-1zM13 530h1v1h-1zM17 530h1v1h-1zM21 530h1v1h-1zM25 530h1v1h-1zM29 530h1v1h-1zM33 530h1v1h-1zM37 530h1v1h-1zM41 530h1v1h-1zM45 530h1v1h-1zM49 530h1v1h-1zM53 530h1v1h-1zM57 530h1v1h-1zM61 530h1v1h-1zM65 530h1v1h-1zM69 530h1v1h-1zM73 530h1v1h-1zM77 530h1v1h-1zM81 530h1v1h-1zM85 530h1v1h-1zM89 530h1v1h-1zM93 530h1v1h-1zM97 530h1v1h-1zM101 530h1v1h-1zM105 530h1v1h-1zM109 530h1v1h-1zM113 530h1v1h-1zM117 530h1v1h-1zM121 530h1v1h-1zM125 530h1v1h-1zM129 530h1v1h-1zM133 530h1v1h-1zM137 530h1v1h-1zM141 530h1v1h-1zM145 530h1v1h-1zM149 530h1v1h-1zM153 530h1v1h-1zM157 530h1v1h-1zM161 530h1v1h-1zM165 530h1v1h-1zM169 530h1v1h-1zM173 530h1v1h-1zM177 530h1v1h-1zM181 530h1v1h-1zM185 530h1v1h-1zM189 530h1v1h-1zM193 530h1v1h-1zM197 530h1v1h-1zM201 530h1v1h-1zM205 530h1v1h-1zM209 530h1v1h-1zM213 530h1v1h-1zM217 530h1v1h-1zM221 530h1v1h-1zM225 530h1v1h-1zM229 530h1v1h-1zM233 530h1v1h-1zM237 530h1v1h-1zM241 530h1v1h-1zM245 530h1v1h-1zM249 530h1v1h-1zM253 530h1v1h-1zM257 530h1v1h-1zM261 530h1v1h-1zM265 530h1v1h-1zM269 530h1v1h-1zM273 530h1v1h-1zM277 530h1v1h-1zM281 530h1v1h-1zM285 530h1v1h-1zM289 530h1v1h-1zM293 530h1v1h-1zM297 530h1v1h-1zM301 530h1v1h-1zM305 530h1v1h-1zM309 530h1v1h-1zM313 530h1v1h-1zM317 530h1v1h-1zM321 530h1v1h-1zM325 530h1v1h-1zM329 530h1v1h-1zM333 530h1v1h-1zM337 530h1v1h-1zM341 530h1v1h-1zM345 530h1v1h-1zM349 530h1v1h-1zM353 530h1v1h-1zM357 530h1v1h-1zM361 530h1v1h-1zM365 530h1v1h-1zM369 530h1v1h-1zM373 530h1v1h-1zM377 530h1v1h-1zM381 530h1v1h-1zM385 530h1v1h-1zM389 530h1v1h-1zM393 530h1v1h-1zM397 530h1v1h-1zM401 530h1v1h-1zM405 530h1v1h-1zM409 530h1v1h-1zM413 530h1v1h-1zM417 530h1v1h-1zM421 530h1v1h-1zM425 530h1v1h-1zM429 530h1v1h-1zM433 530h1v1h-1zM437 530h1v1h-1zM441 530h1v1h-1zM445 530h1v1h-1zM449 530h1v1h-1zM453 530h1v1h-1zM457 530h1v1h-1zM461 530h1v1h-1zM465 530h1v1h-1zM469 530h1v1h-1zM473 530h1v1h-1zM477 530h1v1h-1zM481 530h1v1h-1zM485 530h1v1h-1zM489 530h1v1h-1zM493 530h1v1h-1zM497 530h1v1h-1zM501 530h1v1h-1zM505 530h1v1h-1zM509 530h1v1h-1zM513 530h1v1h-1zM517 530h1v1h-1zM521 530h1v1h-1zM525 530h1v1h-1zM529 530h1v1h-1zM533 530h1v1h-1zM537 530h1v1h-1zM541 530h1v1h-1zM545 530h1v1h-1zM549 530h1v1h-1zM553 530h1v1h-1zM557 530h1v1h-1zM561 530h1v1h-1zM565 530h1v1h-1zM569 530h1v1h-1zM573 530h1v1h-1zM577 530h1v1h-1zM581 530h1v1h-1zM585 530h1v1h-1zM589 530h1v1h-1zM593 530h1v1h-1zM597 530h1v1h-1zM601 530h1v1h-1zM605 530h1v1h-1zM609 530h1v1h-1zM613 530h1v1h-1zM617 530h1v1h-1zM621 530h1v1h-1zM625 530h1v1h-1zM629 530h1v1h-1zM633 530h1v1h-1zM637 530h1v1h-1zM641 530h1v1h-1zM645 530h1v1h-1zM649 530h1v1h-1zM653 530h1v1h-1zM657 530h1v1h-1zM661 530h1v1h-1zM665 530h1v1h-1zM669 530h1v1h-1zM673 530h1v1h-1zM677 530h1v1h-1zM681 530h1v1h-1zM685 530h1v1h-1zM689 530h1v1h-1zM693 530h1v1h-1zM697 530h1v1h-1zM701 530h1v1h-1zM705 530h1v1h-1zM709 530h1v1h-1zM713 530h1v1h-1zM717 530h1v1h-1zM721 530h1v1h-1zM725 530h1v1h-1zM729 530h1v1h-1zM733 530h1v1h-1zM737 530h1v1h-1zM741 530h1v1h-1zM745 530h1v1h-1zM749 530h1v1h-1zM753 530h1v1h-1zM757 530h1v1h-1zM761 530h1v1h-1zM765 530h1v1h-1zM769 530h1v1h-1zM773 530h1v1h-1zM777 530h1v1h-1zM781 530h1v1h-1zM785 530h1v1h-1zM789 530h1v1h-1zM793 530h1v1h-1zM797 530h1v1h-1zM801 530h1v1h-1zM805 530h1v1h-1zM809 530h1v1h-1zM813 530h1v1h-1zM817 530h1v1h-1zM821 530h1v1h-1zM825 530h1v1h-1zM829 530h1v1h-1zM833 530h1v1h-1zM837 530h1v1h-1zM841 530h1v1h-1zM845 530h1v1h-1zM849 530h1v1h-1zM853 530h1v1h-1zM857 530h1v1h-1zM861 530h1v1h-1zM865 530h1v1h-1zM869 530h1v1h-1zM873 530h1v1h-1zM877 530h1v1h-1zM881 530h1v1h-1zM885 530h1v1h-1zM889 530h1v1h-1zM893 530h1v1h-1zM897 530h1v1h-1zM901 530h1v1h-1zM905 530h1v1h-1zM909 530h1v1h-1zM913 530h1v1h-1zM917 530h1v1h-1zM921 530h1v1h-1zM925 530h1v1h-1zM929 530h1v1h-1zM933 530h1v1h-1zM937 530h1v1h-1zM941 530h1v1h-1zM945 530h1v1h-1zM949 530h1v1h-1zM953 530h1v1h-1zM957 530h1v1h-1zM961 530h1v1h-1zM965 530h1v1h-1zM969 530h1v1h-1zM973 530h1v1h-1zM977 530h1v1h-1zM981 530h1v1h-1zM985 530h1v1h-1zM989 530h1v1h-1zM993 530h1v1h-1zM997 530h1v1h-1zM1001 530h1v1h-1zM1005 530h1v1h-1zM1009 530h1v1h-1zM1013 530h1v1h-1zM1017 530h1v1h-1zM1021 530h1v1h-1zM1025 530h1v1h-1zM1029 530h1v1h-1zM1033 530h1v1h-1zM1037 530h1v1h-1zM1041 530h1v1h-1zM1045 530h1v1h-1zM1049 530h1v1h-1zM1053 530h1v1h-1zM1057 530h1v1h-1zM1061 530h1v1h-1zM1065 530h1v1h-1zM1069 530h1v1h-1zM1073 530h1v1h-1zM1 569h1v1h-1zM5 569h1v1h-1zM9 569h1v1h-1zM13 569h1v1h-1zM17 569h1v1h-1zM21 569h1v1h-1zM25 569h1v1h-1zM29 569h1v1h-1zM33 569h1v1h-1zM37 569h1v1h-1zM41 569h1v1h-1zM45 569h1v1h-1zM49 569h1v1h-1zM53 569h1v1h-1zM57 569h1v1h-1zM61 569h1v1h-1zM65 569h1v1h-1zM69 569h1v1h-1zM73 569h1v1h-1zM77 569h1v1h-1zM81 569h1v1h-1zM85 569h1v1h-1zM89 569h1v1h-1zM93 569h1v1h-1zM97 569h1v1h-1zM101 569h1v1h-1zM105 569h1v1h-1zM109 569h1v1h-1zM113 569h1v1h-1zM117 569h1v1h-1zM121 569h1v1h-1zM125 569h1v1h-1zM129 569h1v1h-1zM133 569h1v1h-1zM137 569h1v1h-1zM141 569h1v1h-1zM145 569h1v1h-1zM149 569h1v1h-1zM153 569h1v1h-1zM157 569h1v1h-1zM161 569h1v1h-1zM165 569h1v1h-1zM169 569h1v1h-1zM173 569h1v1h-1zM177 569h1v1h-1zM181 569h1v1h-1zM185 569h1v1h-1zM189 569h1v1h-1zM193 569h1v1h-1zM197 569h1v1h-1zM201 569h1v1h-1zM205 569h1v1h-1zM209 569h1v1h-1zM213 569h1v1h-1zM217 569h1v1h-1zM221 569h1v1h-1zM225 569h1v1h-1zM229 569h1v1h-1zM233 569h1v1h-1zM237 569h1v1h-1zM241 569h1v1h-1zM245 569h1v1h-1zM249 569h1v1h-1zM253 569h1v1h-1zM257 569h1v1h-1zM261 569h1v1h-1zM265 569h1v1h-1zM269 569h1v1h-1zM273 569h1v1h-1zM277 569h1v1h-1zM281 569h1v1h-1zM285 569h1v1h-1zM289 569h1v1h-1zM293 569h1v1h-1zM297 569h1v1h-1zM301 569h1v1h-1zM305 569h1v1h-1zM309 569h1v1h-1zM313 569h1v1h-1zM317 569h1v1h-1zM321 569h1v1h-1zM325 569h1v1h-1zM329 569h1v1h-1zM333 569h1v1h-1zM337 569h1v1h-1zM341 569h1v1h-1zM345 569h1v1h-1zM349 569h1v1h-1zM353 569h1v1h-1zM357 569h1v1h-1zM361 569h1v1h-1zM365 569h1v1h-1zM369 569h1v1h-1zM373 569h1v1h-1zM377 569h1v1h-1zM381 569h1v1h-1zM385 569h1v1h-1zM389 569h1v1h-1zM393 569h1v1h-1zM397 569h1v1h-1zM401 569h1v1h-1zM405 569h1v1h-1zM409 569h1v1h-1zM413 569h1v1h-1zM417 569h1v1h-1zM421 569h1v1h-1zM425 569h1v1h-1zM429 569h1v1h-1zM433 569h1v1h-1zM437 569h1v1h-1zM441 569h1v1h-1zM445 569h1v1h-1zM449 569h1v1h-1zM453 569h1v1h-1zM457 569h1v1h-1zM461 569h1v1h-1zM465 569h1v1h-1zM469 569h1v1h-1zM473 569h1v1h-1zM477 569h1v1h-1zM481 569h1v1h-1zM485 569h1v1h-1zM489 569h1v1h-1zM493 569h1v1h-1zM497 569h1v1h-1zM501 569h1v1h-1zM505 569h1v1h-1zM509 569h1v1h-1zM513 569h1v1h-1zM517 569h1v1h-1zM521 569h1v1h-1zM525 569h1v1h-1zM529 569h1v1h-1zM533 569h1v1h-1zM537 569h1v1h-1zM541 569h1v1h-1zM545 569h1v1h-1zM549 569h1v1h-1zM553 569h1v1h-1zM557 569h1v1h-1zM561 569h1v1h-1zM565 569h1v1h-1zM569 569h1v1h-1zM573 569h1v1h-1zM577 569h1v1h-1zM581 569h1v1h-1zM585 569h1v1h-1zM589 569h1v1h-1zM593 569h1v1h-1zM597 569h1v1h-1zM601 569h1v1h-1zM605 569h1v1h-1zM609 569h1v1h-1zM613 569h1v1h-1zM617 569h1v1h-1zM621 569h1v1h-1zM625 569h1v1h-1zM629 569h1v1h-1zM633 569h1v1h-1zM637 569h1v1h-1zM641 569h1v1h-1zM645 569h1v1h-1zM649 569h1v1h-1zM653 569h1v1h-1zM657 569h1v1h-1zM661 569h1v1h-1zM665 569h1v1h-1zM669 569h1v1h-1zM673 569h1v1h-1zM677 569h1v1h-1zM681 569h1v1h-1zM685 569h1v1h-1zM689 569h1v1h-1zM693 569h1v1h-1zM697 569h1v1h-1zM701 569h1v1h-1zM705 569h1v1h-1zM709 569h1v1h-1zM713 569h1v1h-1zM717 569h1v1h-1zM721 569h1v1h-1zM725 569h1v1h-1zM729 569h1v1h-1zM733 569h1v1h-1zM737 569h1v1h-1zM741 569h1v1h-1zM745 569h1v1h-1zM749 569h1v1h-1zM753 569h1v1h-1zM757 569h1v1h-1zM761 569h1v1h-1zM765 569h1v1h-1zM769 569h1v1h-1zM773 569h1v1h-1zM777 569h1v1h-1zM781 569h1v1h-1zM785 569h1v1h-1zM789 569h1v1h-1zM793 569h1v1h-1zM797 569h1v1h-1zM801 569h1v1h-1zM805 569h1v1h-1zM809 569h1v1h-1zM813 569h1v1h-1zM817 569h1v1h-1zM821 569h1v1h-1zM825 569h1v1h-1zM829 569h1v1h-1zM833 569h1v1h-1zM837 569h1v1h-1zM841 569h1v1h-1zM845 569h1v1h-1zM849 569h1v1h-1zM853 569h1v1h-1zM857 569h1v1h-1zM861 569h1v1h-1zM865 569h1v1h-1zM869 569h1v1h-1zM873 569h1v1h-1zM877 569h1v1h-1zM881 569h1v1h-1zM885 569h1v1h-1zM889 569h1v1h-1zM893 569h1v1h-1zM897 569h1v1h-1zM901 569h1v1h-1zM905 569h1v1h-1zM909 569h1v1h-1zM913 569h1v1h-1zM917 569h1v1h-1zM921 569h1v1h-1zM925 569h1v1h-1zM929 569h1v1h-1zM933 569h1v1h-1zM937 569h1v1h-1zM941 569h1v1h-1zM945 569h1v1h-1zM949 569h1v1h-1zM953 569h1v1h-1zM957 569h1v1h-1zM961 569h1v1h-1zM965 569h1v1h-1zM969 569h1v1h-1zM973 569h1v1h-1zM977 569h1v1h-1zM981 569h1v1h-1zM985 569h1v1h-1zM989 569h1v1h-1zM993 569h1v1h-1zM997 569h1v1h-1zM1001 569h1v1h-1zM1005 569h1v1h-1zM1009 569h1v1h-1zM1013 569h1v1h-1zM1017 569h1v1h-1zM1021 569h1v1h-1zM1025 569h1v1h-1zM1029 569h1v1h-1zM1033 569h1v1h-1zM1037 569h1v1h-1zM1041 569h1v1h-1zM1045 569h1v1h-1zM1049 569h1v1h-1zM1053 569h1v1h-1zM1057 569h1v1h-1zM1061 569h1v1h-1zM1065 569h1v1h-1zM1069 569h1v1h-1zM1073 569h1v1h-1z"/>
<path shape-rendering="crispEdges" fill="#b00000" d="M0 0h1v20h-1zM23 0h1v20h-1zM0 19h1127v1h-1127zM810 0h1v20h-1zM844 0h1v20h-1zM879 0h1v20h-1zM914 0h1v20h-1zM949 0h1v20h-1zM984 0h1v20h-1zM1019 0h1v20h-1zM1054 0h1v20h-1zM1089 0h1v20h-1zM1126 0h1v397h-1zM1075 20h1v377h-1zM0 396h1130v1h-1130zM1075 397h52v1h-52zM1075 397h2v203h-2zM1125 397h2v203h-2zM0 630h978v1h-978zM0 646h978v1h-978zM81 630h1v17h-1zM219 630h1v17h-1zM363 630h1v17h-1zM529 630h1v17h-1zM680 630h1v17h-1zM838 630h1v17h-1zM962 630h1v17h-1zM116 631h1v2h-1zM150 631h1v2h-1zM185 631h1v2h-1zM255 631h1v2h-1zM292 631h1v2h-1zM327 631h1v2h-1zM405 631h1v2h-1zM446 631h1v2h-1zM488 631h1v2h-1zM605 631h1v2h-1zM642 631h1v2h-1zM720 631h1v2h-1zM761 631h1v2h-1zM800 631h1v2h-1zM871 631h1v2h-1zM901 631h1v2h-1zM931 631h1v2h-1zM0 647h1v3h-1zM42 647h1v3h-1zM73 647h1v3h-1zM115 647h1v3h-1zM144 647h1v3h-1zM177 647h1v3h-1zM207 647h1v3h-1zM240 647h1v3h-1zM267 647h1v3h-1zM308 647h1v3h-1zM332 647h1v3h-1zM363 647h1v3h-1zM390 647h1v3h-1zM422 647h1v3h-1zM480 647h1v3h-1zM508 647h1v3h-1zM535 647h1v3h-1zM599 647h1v3h-1zM628 647h1v3h-1zM663 647h1v3h-1zM696 647h1v3h-1zM735 647h1v3h-1zM766 647h1v3h-1zM807 647h1v3h-1zM839 647h1v3h-1zM871 647h1v3h-1zM1076 67h5v1h-5zM1076 94h3v1h-3zM1076 121h5v1h-5zM1076 148h3v1h-3zM1076 175h5v1h-5zM1076 202h3v1h-3zM1076 229h5v1h-5zM1076 256h3v1h-3zM1076 283h5v1h-5zM1076 310h3v1h-3zM1076 337h5v1h-5zM1076 364h3v1h-3zM1077 415h5v1h-5zM1077 453h5v1h-5zM1077 492h5v1h-5zM1077 530h5v1h-5zM1077 569h5v1h-5zM1077 434h2v1h-2zM1077 473h2v1h-2zM1077 511h2v1h-2zM1077 550h2v1h-2zM1077 588h2v1h-2zM1127 25h3v1h-3zM1127 45h3v1h-3zM1127 136h3v1h-3zM1127 233h3v1h-3z"/>
<path shape-rendering="crispEdges" fill="#b0b0b0" d="M1128 59h2v1h-2zM1128 78h2v1h-2zM1128 97h2v1h-2zM1128 116h2v1h-2zM1128 129h2v1h-2zM1128 147h2v1h-2zM1128 154h2v1h-2zM1128 168h2v1h-2zM1128 175h2v1h-2zM1128 185h2v1h-2zM1128 191h2v1h-2zM1128 198h2v1h-2zM1128 205h2v1h-2zM1128 211h2v1h-2zM1128 218h2v1h-2zM1128 226h2v1h-2zM1128 237h2v1h-2zM1128 243h2v1h-2zM1128 256h2v1h-2zM1128 269h2v1h-2zM1128 282h2v1h-2zM1128 295h2v1h-2zM1128 308h2v1h-2zM1128 321h2v1h-2zM1128 334h2v1h-2zM1128 347h2v1h-2zM1128 360h2v1h-2zM1128 373h2v1h-2zM1128 386h2v1h-2zM1128 425h2v1h-2zM1128 440h2v1h-2zM1128 455h2v1h-2zM1128 470h2v1h-2zM1128 485h2v1h-2zM1128 500h2v1h-2zM1128 515h2v1h-2zM1128 530h2v1h-2zM1128 545h2v1h-2zM1128 560h2v1h-2zM1128 575h2v1h-2zM1128 590h2v1h-2z"/>
<path shape-rendering="crispEdges" fill="#c0c0c0" d="M8 649h1v1h-1zM10 649h1v1h-1zM16 649h1v1h-1zM19 649h1v1h-1zM51 649h1v1h-1zM828 649h1v1h-1z"/>
<path shape-rendering="crispEdges" fill="#54ffff" d="M845 649h2v1h-2zM849 649h5v1h-5zM857 649h9v1h-9z"/>
<path shape-rendering="crispEdges" fill="#ff3232" d="M10 343h1v19h-1zM8 362h5v1h-5zM8 371h5v1h-5zM8 363h1v8h-1zM12 363h1v8h-1zM18 356h1v19h-1zM16 347h5v1h-5zM16 355h5v1h-5zM16 348h1v7h-1zM20 348h1v7h-1zM25 347h1v10h-1zM23 317h5v1h-5zM23 346h5v1h-5zM23 318h1v28h-1zM27 318h1v28h-1zM39 271h1v15h-1zM37 286h5v1h-5zM37 322h5v1h-5zM37 287h1v35h-1zM41 287h1v35h-1zM54 329h1v20h-1zM52 349h5v1h-5zM52 362h5v1h-5zM52 350h1v12h-1zM56 350h1v12h-1zM61 329h1v20h-1zM61 360h1v2h-1zM59 349h5v1h-5zM59 359h5v1h-5zM59 350h1v9h-1zM63 350h1v9h-1zM75 317h1v6h-1zM75 356h1v1h-1zM73 323h5v1h-5zM73 355h5v1h-5zM73 324h1v31h-1zM77 324h1v31h-1zM82 279h1v3h-1zM82 306h1v9h-1zM80 282h5v1h-5zM80 305h5v1h-5zM80 283h1v22h-1zM84 283h1v22h-1zM97 286h1v7h-1zM95 262h5v1h-5zM95 285h5v1h-5zM95 263h1v22h-1zM99 263h1v22h-1zM111 279h1v4h-1zM111 287h1v5h-1zM109 283h5v1h-5zM109 286h5v1h-5zM109 284h1v2h-1zM113 284h1v2h-1zM126 242h1v25h-1zM126 295h1v2h-1zM124 267h5v1h-5zM124 294h5v1h-5zM124 268h1v26h-1zM128 268h1v26h-1zM140 300h1v9h-1zM140 322h1v4h-1zM138 309h5v1h-5zM138 321h5v1h-5zM138 310h1v11h-1zM142 310h1v11h-1zM147 307h1v23h-1zM145 303h5v1h-5zM145 306h5v1h-5zM145 304h1v2h-1zM149 304h1v2h-1zM155 305h1v13h-1zM153 296h5v1h-5zM153 304h5v1h-5zM153 297h1v7h-1zM157 297h1v7h-1zM183 282h1v12h-1zM183 312h1v9h-1zM181 294h5v1h-5zM181 311h5v1h-5zM181 295h1v16h-1zM185 295h1v16h-1zM198 270h1v34h-1zM198 329h1v1h-1zM196 304h5v1h-5zM196 328h5v1h-5zM196 305h1v23h-1zM200 305h1v23h-1zM205 268h1v7h-1zM205 305h1v7h-1zM203 275h5v1h-5zM203 304h5v1h-5zM203 276h1v28h-1zM207 276h1v28h-1zM220 299h1v21h-1zM220 322h1v3h-1zM218 320h5v1h-5zM218 321h5v1h-5zM234 294h1v7h-1zM234 321h1v10h-1zM232 301h5v1h-5zM232 320h5v1h-5zM232 302h1v18h-1zM236 302h1v18h-1zM241 180h1v57h-1zM241 299h1v17h-1zM239 237h5v1h-5zM239 298h5v1h-5zM239 238h1v60h-1zM243 238h1v60h-1zM248 204h1v15h-1zM248 226h1v16h-1zM246 219h5v1h-5zM246 225h5v1h-5zM246 220h1v5h-1zM250 220h1v5h-1zM263 159h1v27h-1zM263 239h1v16h-1zM261 186h5v1h-5zM261 238h5v1h-5zM261 187h1v51h-1zM265 187h1v51h-1zM270 163h1v19h-1zM270 186h1v25h-1zM268 182h5v1h-5zM268 185h5v1h-5zM268 183h1v2h-1zM272 183h1v2h-1zM284 228h1v7h-1zM284 258h1v4h-1zM282 235h5v1h-5zM282 257h5v1h-5zM282 236h1v21h-1zM286 236h1v21h-1zM321 339h1v7h-1zM321 374h1v1h-1zM319 346h5v1h-5zM319 373h5v1h-5zM319 347h1v26h-1zM323 347h1v26h-1zM328 308h1v4h-1zM326 312h5v1h-5zM326 343h5v1h-5zM326 313h1v30h-1zM330 313h1v30h-1zM335 297h1v8h-1zM335 312h1v8h-1zM333 305h5v1h-5zM333 311h5v1h-5zM333 306h1v5h-1zM337 306h1v5h-1zM349 304h1v6h-1zM349 314h1v5h-1zM347 310h5v1h-5zM347 313h5v1h-5zM347 311h1v2h-1zM351 311h1v2h-1zM357 283h1v7h-1zM357 311h1v1h-1zM355 290h5v1h-5zM355 310h5v1h-5zM355 291h1v19h-1zM359 291h1v19h-1zM378 297h1v8h-1zM376 305h5v1h-5zM376 312h5v1h-5zM376 306h1v6h-1zM380 306h1v6h-1zM393 305h1v11h-1zM393 331h1v3h-1zM391 316h5v1h-5zM391 330h5v1h-5zM391 317h1v13h-1zM395 317h1v13h-1zM400 318h1v3h-1zM398 307h5v1h-5zM398 317h5v1h-5zM398 308h1v9h-1zM402 308h1v9h-1zM414 317h1v1h-1zM414 321h1v9h-1zM412 318h5v1h-5zM412 320h5v1h-5zM412 319h1v1h-1zM416 319h1v1h-1zM422 308h1v3h-1zM422 319h1v9h-1zM420 311h5v1h-5zM420 318h5v1h-5zM420 312h1v6h-1zM424 312h1v6h-1zM436 313h1v18h-1zM434 192h5v1h-5zM434 312h5v1h-5zM434 193h1v119h-1zM438 193h1v119h-1zM465 218h1v5h-1zM465 228h1v4h-1zM463 223h5v1h-5zM463 227h5v1h-5zM463 224h1v3h-1zM467 224h1v3h-1zM486 239h1v15h-1zM484 236h5v1h-5zM484 238h5v1h-5zM484 237h1v1h-1zM488 237h1v1h-1zM494 180h1v7h-1zM494 234h1v1h-1zM492 187h5v1h-5zM492 233h5v1h-5zM492 188h1v45h-1zM496 188h1v45h-1zM508 192h1v7h-1zM508 212h1v6h-1zM506 199h5v1h-5zM506 211h5v1h-5zM506 200h1v11h-1zM510 200h1v11h-1zM523 180h1v10h-1zM521 190h5v1h-5zM521 232h5v1h-5zM521 191h1v41h-1zM525 191h1v41h-1zM537 55h1v53h-1zM537 207h1v1h-1zM535 108h5v1h-5zM535 206h5v1h-5zM535 109h1v97h-1zM539 109h1v97h-1zM551 106h1v6h-1zM551 121h1v15h-1zM549 112h5v1h-5zM549 120h5v1h-5zM549 113h1v7h-1zM553 113h1v7h-1zM573 136h1v2h-1zM573 155h1v4h-1zM571 138h5v1h-5zM571 154h5v1h-5zM571 139h1v15h-1zM575 139h1v15h-1zM595 127h1v21h-1zM595 162h1v2h-1zM593 148h5v1h-5zM593 161h5v1h-5zM593 149h1v12h-1zM597 149h1v12h-1zM602 102h1v6h-1zM602 148h1v16h-1zM600 108h5v1h-5zM600 147h5v1h-5zM600 109h1v38h-1zM604 109h1v38h-1zM609 64h1v31h-1zM609 112h1v8h-1zM607 95h5v1h-5zM607 111h5v1h-5zM607 96h1v15h-1zM611 96h1v15h-1zM616 68h1v10h-1zM616 95h1v23h-1zM614 78h5v1h-5zM614 94h5v1h-5zM614 79h1v15h-1zM618 79h1v15h-1zM638 99h1v5h-1zM638 110h1v10h-1zM636 104h5v1h-5zM636 109h5v1h-5zM636 105h1v4h-1zM640 105h1v4h-1zM681 177h1v11h-1zM679 188h5v1h-5zM679 197h5v1h-5zM679 189h1v8h-1zM683 189h1v8h-1zM703 246h1v11h-1zM703 263h1v30h-1zM701 257h5v1h-5zM701 262h5v1h-5zM701 258h1v4h-1zM705 258h1v4h-1zM717 203h1v20h-1zM717 245h1v9h-1zM715 223h5v1h-5zM715 244h5v1h-5zM715 224h1v20h-1zM719 224h1v20h-1zM732 243h1v9h-1zM732 254h1v5h-1zM730 252h5v1h-5zM730 253h5v1h-5zM739 236h1v1h-1zM739 256h1v6h-1zM737 237h5v1h-5zM737 255h5v1h-5zM737 238h1v17h-1zM741 238h1v17h-1zM753 201h1v12h-1zM753 225h1v21h-1zM751 213h5v1h-5zM751 224h5v1h-5zM751 214h1v10h-1zM755 214h1v10h-1zM761 202h1v8h-1zM761 219h1v11h-1zM759 210h5v1h-5zM759 218h5v1h-5zM759 211h1v7h-1zM763 211h1v7h-1zM790 255h1v10h-1zM790 267h1v4h-1zM788 265h5v1h-5zM788 266h5v1h-5zM804 280h1v1h-1zM804 302h1v9h-1zM802 281h5v1h-5zM802 301h5v1h-5zM802 282h1v19h-1zM806 282h1v19h-1zM833 303h1v8h-1zM833 314h1v1h-1zM831 311h5v1h-5zM831 313h5v1h-5zM831 312h1v1h-1zM835 312h1v1h-1zM838 296h5v1h-5zM838 311h5v1h-5zM838 297h1v14h-1zM842 297h1v14h-1zM854 338h1v34h-1zM852 303h5v1h-5zM852 337h5v1h-5zM852 304h1v33h-1zM856 304h1v33h-1zM869 322h1v13h-1zM867 310h5v1h-5zM867 321h5v1h-5zM867 311h1v10h-1zM871 311h1v10h-1zM891 332h1v4h-1zM891 339h1v2h-1zM889 336h5v1h-5zM889 338h5v1h-5zM889 337h1v1h-1zM893 337h1v1h-1zM898 300h1v3h-1zM896 303h5v1h-5zM896 335h5v1h-5zM896 304h1v31h-1zM900 304h1v31h-1zM912 295h1v3h-1zM912 311h1v7h-1zM910 298h5v1h-5zM910 310h5v1h-5zM910 299h1v11h-1zM914 299h1v11h-1zM927 292h1v2h-1zM927 299h1v12h-1zM925 294h5v1h-5zM925 298h5v1h-5zM925 295h1v3h-1zM929 295h1v3h-1zM934 276h1v6h-1zM934 306h1v1h-1zM932 282h5v1h-5zM932 305h5v1h-5zM932 283h1v22h-1zM936 283h1v22h-1zM955 298h1v1h-1zM953 299h5v1h-5zM953 315h5v1h-5zM953 300h1v15h-1zM957 300h1v15h-1zM963 302h1v5h-1zM961 285h5v1h-5zM961 301h5v1h-5zM961 286h1v15h-1zM965 286h1v15h-1zM977 289h1v1h-1zM977 299h1v5h-1zM975 290h5v1h-5zM975 298h5v1h-5zM975 291h1v7h-1zM979 291h1v7h-1zM984 287h1v1h-1zM984 290h1v12h-1zM982 288h5v1h-5zM982 289h5v1h-5zM999 290h1v1h-1zM999 296h1v3h-1zM997 291h5v1h-5zM997 295h5v1h-5zM997 292h1v3h-1zM1001 292h1v3h-1zM1006 274h1v5h-1zM1006 291h1v4h-1zM1004 279h5v1h-5zM1004 290h5v1h-5zM1004 280h1v10h-1zM1008 280h1v10h-1zM1020 265h1v8h-1zM1020 292h1v7h-1zM1018 273h5v1h-5zM1018 291h5v1h-5zM1018 274h1v17h-1zM1022 274h1v17h-1zM1035 282h1v1h-1zM1033 258h5v1h-5zM1033 281h5v1h-5zM1033 259h1v22h-1zM1037 259h1v22h-1zM1049 145h1v66h-1zM1049 267h1v5h-1zM1047 211h5v1h-5zM1047 266h5v1h-5zM1047 212h1v54h-1zM1051 212h1v54h-1z"/>
<path shape-rendering="crispEdges" fill="#54ffff" d="M3 320h1v56h-1zM1 342h5v19h-5zM32 309h1v27h-1zM30 320h5v12h-5zM46 310h1v54h-1zM44 321h5v38h-5zM68 339h1v30h-1zM66 356h5v1h-5zM90 252h1v49h-1zM88 256h5v25h-5zM104 256h1v43h-1zM102 259h5v35h-5zM119 268h1v28h-1zM117 272h5v22h-5zM133 262h1v53h-1zM131 264h5v46h-5zM162 284h1v35h-1zM160 295h5v11h-5zM169 299h1v29h-1zM167 309h5v15h-5zM176 312h1v37h-1zM174 326h5v19h-5zM191 288h1v42h-1zM189 294h5v28h-5zM212 273h1v45h-1zM210 285h5v30h-5zM227 317h1v15h-1zM225 317h5v3h-5zM256 210h1v51h-1zM254 219h5v23h-5zM277 182h1v57h-1zM275 197h5v39h-5zM292 221h1v40h-1zM290 224h5v32h-5zM299 262h1v37h-1zM297 266h5v25h-5zM306 278h1v58h-1zM304 297h5v37h-5zM313 324h1v50h-1zM311 325h5v34h-5zM342 286h1v30h-1zM340 304h5v8h-5zM364 278h1v28h-1zM362 288h5v6h-5zM371 285h1v30h-1zM369 299h5v9h-5zM385 306h1v17h-1zM383 309h5v13h-5zM407 297h1v27h-1zM405 310h5v9h-5zM429 309h1v13h-1zM427 310h5v3h-5zM443 89h1v124h-1zM441 123h5v87h-5zM450 198h1v30h-1zM448 208h5v11h-5zM458 176h1v43h-1zM456 186h5v26h-5zM472 222h1v22h-1zM470 227h5v12h-5zM479 233h1v18h-1zM477 241h5v8h-5zM501 164h1v47h-1zM499 176h5v26h-5zM515 192h1v46h-1zM513 193h5v35h-5zM530 161h1v49h-1zM528 170h5v18h-5zM544 98h1v53h-1zM542 107h5v35h-5zM559 120h1v28h-1zM557 128h5v9h-5zM566 110h1v56h-1zM564 139h5v7h-5zM580 138h1v26h-1zM578 138h5v17h-5zM588 147h1v22h-1zM586 160h5v2h-5zM624 83h1v32h-1zM622 85h5v16h-5zM631 80h1v38h-1zM629 96h5v20h-5zM645 90h1v25h-1zM643 90h5v16h-5zM660 39h1v109h-1zM658 110h5v37h-5zM667 136h1v88h-1zM665 171h5v11h-5zM674 181h1v22h-1zM672 181h5v17h-5zM689 189h1v49h-1zM687 191h5v28h-5zM696 212h1v60h-1zM694 218h5v44h-5zM710 188h1v62h-1zM708 225h5v11h-5zM725 231h1v20h-1zM723 240h5v10h-5zM746 219h1v20h-1zM744 229h5v1h-5zM768 228h1v17h-1zM766 229h5v3h-5zM775 224h1v41h-1zM773 230h5v25h-5zM782 245h1v30h-1zM780 256h5v10h-5zM797 249h1v60h-1zM795 249h5v48h-5zM811 263h1v25h-1zM809 280h5v8h-5zM818 290h1v26h-1zM816 290h5v25h-5zM826 307h1v25h-1zM824 313h5v2h-5zM847 297h1v13h-1zM845 297h5v10h-5zM862 295h1v31h-1zM860 299h5v24h-5zM876 306h1v20h-1zM874 308h5v8h-5zM883 316h1v31h-1zM881 321h5v26h-5zM905 279h1v29h-1zM903 302h5v4h-5zM919 294h1v9h-1zM917 297h5v1h-5zM941 285h1v19h-1zM939 285h5v13h-5zM948 299h1v17h-1zM946 303h5v12h-5zM970 285h1v14h-1zM968 285h5v5h-5zM992 280h1v16h-1zM990 293h5v3h-5zM1013 278h1v21h-1zM1011 283h5v10h-5zM1028 269h1v13h-1zM1026 271h5v11h-5zM1042 238h1v28h-1zM1040 245h5v14h-5z"/>
<path shape-rendering="crispEdges" fill="#ffffff" d="M652 91h1v29h-1zM650 110h5v1h-5z"/>
<polyline shape-rendering="crispEdges" fill="none" stroke="#ff0000" stroke-width="1" stroke-linejoin="round" points="3.5,549.0 10.5,552.6 18.5,528.0 25.5,495.0 32.5,516.0 39.5,481.0 46.5,565.0 54.5,551.6 61.5,550.0 68.5,564.4 75.5,484.0 82.5,454.4 90.5,460.0 97.5,445.0 104.5,494.0 111.5,475.0 119.5,504.0 126.5,449.0 133.5,539.0 140.5,535.6 147.5,523.0 155.5,513.0 162.5,526.0 169.5,556.0 176.5,580.6 183.5,494.0 191.5,557.0 198.5,510.0 205.5,444.4 212.5,556.0 220.5,566.0 227.5,561.6 234.5,500.0 241.5,434.0 248.5,434.4 256.5,470.0 263.5,423.0 270.5,431.0 277.5,510.0 284.5,504.4 292.5,535.0 299.5,566.0 306.5,599.0 313.5,603.6 321.5,587.4 328.5,559.0 335.5,546.0 342.5,561.0 349.5,555.6 357.5,513.0 364.5,520.0 371.5,554.4 378.5,546.0 385.5,581.0 393.5,569.0 400.5,541.0 407.5,576.0 414.5,570.0 422.5,546.0 429.5,550.0 436.5,428.4 443.5,480.0 450.5,499.0 458.5,498.4 465.5,513.0 472.5,535.6 479.5,545.6 486.5,520.0 494.5,444.4 501.5,478.0 508.5,471.0 515.5,538.4 523.5,448.4 530.5,453.0 537.5,428.4 544.5,477.0 551.5,433.6 559.5,496.0 566.5,516.0 573.5,498.0 580.5,529.0 588.5,539.4 595.5,510.0 602.5,422.4 609.5,432.4 616.5,422.0 624.5,454.0 631.5,489.0 638.5,467.0 645.5,479.0 652.5,495.0 660.5,560.0 667.5,578.0 674.5,587.4 681.5,574.6 689.5,596.0 696.5,604.4 703.5,597.0 710.5,588.0 717.5,577.6 725.5,595.6 732.5,594.0 739.5,577.0 746.5,570.0 753.5,549.0 761.5,542.4 768.5,568.0 775.5,596.6 782.5,600.4 790.5,599.4 797.5,605.4 804.5,598.4 811.5,600.0 818.5,606.6 826.5,603.6 833.5,602.4 840.5,589.4 847.5,597.4 854.5,586.4 862.5,602.6 869.5,591.4 876.5,594.4 883.5,606.0 891.5,603.4 898.5,569.4 905.5,575.0 912.5,564.0 919.5,562.4 927.5,554.4 934.5,546.0 941.5,559.0 948.5,588.0 955.5,557.0 963.5,538.0 970.5,539.4 977.5,538.0 984.5,534.0 992.5,551.4 999.5,535.0 1006.5,524.0 1013.5,544.0 1020.5,517.0 1028.5,525.4 1035.5,506.0 1042.5,508.0 1049.5,475.4"/>
<polyline shape-rendering="crispEdges" fill="none" stroke="#ffff00" stroke-width="1" stroke-linejoin="round" points="3.5,527.5 10.5,527.5 18.5,527.5 25.5,494.5 32.5,494.5 39.5,480.5 46.5,480.5 54.5,480.5 61.5,480.5 68.5,480.5 75.5,480.5 82.5,453.5 90.5,453.5 97.5,443.5 104.5,443.5 111.5,443.5 119.5,443.5 126.5,443.5 133.5,443.5 140.5,443.5 147.5,443.5 155.5,443.5 162.5,443.5 169.5,443.5 176.5,443.5 183.5,443.5 191.5,443.5 198.5,443.5 205.5,443.5 212.5,443.5 220.5,443.5 227.5,443.5 234.5,443.5 241.5,433.5 248.5,433.5 256.5,433.5 263.5,422.5 270.5,422.5 277.5,422.5 284.5,422.5 292.5,422.5 299.5,422.5 306.5,422.5 313.5,422.5 321.5,422.5 328.5,422.5 335.5,422.5 342.5,422.5 349.5,422.5 357.5,422.5 364.5,422.5 371.5,422.5 378.5,422.5 385.5,422.5 393.5,422.5 400.5,422.5 407.5,427.5 414.5,504.5 422.5,504.5 429.5,512.5 436.5,423.5 443.5,423.5 450.5,423.5 458.5,423.5 465.5,423.5 472.5,423.5 479.5,423.5 486.5,423.5 494.5,423.5 501.5,423.5 508.5,423.5 515.5,423.5 523.5,423.5 530.5,423.5 537.5,423.5 544.5,423.5 551.5,423.5 559.5,423.5 566.5,423.5 573.5,423.5 580.5,428.5 588.5,428.5 595.5,428.5 602.5,421.5 609.5,421.5 616.5,420.5 624.5,420.5 631.5,420.5 638.5,420.5 645.5,420.5 652.5,420.5 660.5,420.5 667.5,420.5 674.5,420.5 681.5,420.5 689.5,420.5 696.5,420.5 703.5,420.5 710.5,420.5 717.5,420.5 725.5,420.5 732.5,420.5 739.5,420.5 746.5,420.5 753.5,420.5 761.5,456.5 768.5,466.5 775.5,466.5 782.5,479.5 790.5,494.5 797.5,542.5 804.5,542.5 811.5,542.5 818.5,542.5 826.5,542.5 833.5,542.5 840.5,542.5 847.5,542.5 854.5,542.5 862.5,542.5 869.5,542.5 876.5,542.5 883.5,542.5 891.5,542.5 898.5,542.5 905.5,569.5 912.5,563.5 919.5,562.5 927.5,554.5 934.5,545.5 941.5,545.5 948.5,545.5 955.5,545.5 963.5,537.5 970.5,537.5 977.5,537.5 984.5,533.5 992.5,533.5 999.5,533.5 1006.5,523.5 1013.5,523.5 1020.5,516.5 1028.5,516.5 1035.5,505.5 1042.5,505.5 1049.5,475.5"/>
<polyline shape-rendering="crispEdges" fill="none" stroke="#ff00ff" stroke-width="2" stroke-linejoin="round" points="3.5,477.0 10.5,459.0 18.5,438.0 25.5,426.0 32.5,430.6 39.5,424.0 46.5,461.0 54.5,473.0 61.5,480.0 68.5,488.0 75.5,456.0 82.5,435.6 90.5,429.0 97.5,423.6 104.5,444.4 111.5,445.0 119.5,460.6 126.5,442.0 133.5,477.0 140.5,491.0 147.5,492.4 155.5,488.0 162.5,492.0 169.5,511.0 176.5,530.6 183.5,498.6 191.5,513.6 198.5,500.0 205.5,459.0 212.5,493.0 220.5,514.0 227.5,523.6 234.5,497.0 241.5,455.6 248.5,437.0 256.5,443.6 263.5,429.0 270.5,425.0 277.5,463.0 284.5,480.0 292.5,504.0 299.5,528.0 306.5,559.0 313.5,577.0 321.5,578.6 328.5,564.0 335.5,552.4 342.5,552.4 349.5,551.0 357.5,528.0 364.5,520.0 371.5,533.6 378.5,535.6 385.5,554.0 393.5,558.0 400.5,545.0 407.5,553.6 414.5,518.0 422.5,487.0 429.5,468.0 436.5,443.6 443.5,457.0 450.5,474.0 458.5,483.6 465.5,493.0 472.5,509.0 479.5,523.0 486.5,519.0 494.5,477.0 501.5,473.6 508.5,468.0 515.5,497.6 523.5,470.0 530.5,456.0 537.5,439.0 544.5,453.6 551.5,440.0 559.5,465.0 566.5,486.6 573.5,487.0 580.5,501.0 588.5,513.0 595.5,505.6 602.5,460.0 609.5,444.0 616.5,430.0 624.5,441.0 631.5,462.0 638.5,461.6 645.5,468.0 652.5,479.0 660.5,514.5 667.5,545.0 674.5,563.0 681.5,566.0 689.5,579.0 696.5,588.0 703.5,588.4 710.5,586.4 717.5,580.0 725.5,585.0 732.5,587.0 739.5,579.0 746.5,571.0 753.5,555.0 761.5,529.0 768.5,523.6 775.5,534.4 782.5,536.0 790.5,526.0 797.5,502.5 804.5,487.0 811.5,480.0 818.5,480.0 826.5,478.0 833.5,476.6 840.5,469.4 847.5,469.4 854.5,464.0 862.5,469.0 869.5,467.0 876.5,467.0 883.5,473.6 891.5,473.6 898.5,458.0 905.5,439.0 912.5,427.0 919.5,421.0 927.5,418.0 934.5,416.6 941.5,423.0 948.5,440.0 955.5,433.0 963.5,424.6 970.5,420.0 977.5,417.0 984.5,417.0 992.5,424.0 999.5,420.6 1006.5,418.6 1013.5,426.0 1020.5,422.0 1028.5,422.0 1035.5,418.4 1042.5,418.0 1049.5,417.0"/>
<polyline shape-rendering="crispEdges" fill="none" stroke="#00ff00" stroke-width="1" stroke-linejoin="round" points="3.5,614.4 10.5,613.4 18.5,609.6 25.5,605.0 32.5,608.0 39.5,602.6 46.5,612.4 54.5,610.4 61.5,610.4 68.5,611.4 75.5,605.6 82.5,599.4 90.5,600.0 97.5,598.4 104.5,605.4 111.5,604.4 119.5,606.4 126.5,604.4 133.5,610.4 140.5,610.4 147.5,609.0 155.5,607.6 162.5,609.4 169.5,611.6 176.5,614.6 183.5,606.4 191.5,610.4 198.5,607.0 205.5,603.4 212.5,609.4 220.5,610.4 227.5,610.4 234.5,607.4 241.5,598.4 248.5,596.6 256.5,601.0 263.5,595.6 270.5,597.4 277.5,607.4 284.5,607.4 292.5,610.4 299.5,614.0 306.5,619.6 313.5,623.4 321.5,620.0 328.5,613.4 335.5,611.4 342.5,612.4 349.5,611.0 357.5,607.6 364.5,608.6 371.5,610.4 378.5,609.4 385.5,612.4 393.5,610.4 400.5,609.4 407.5,610.4 414.5,610.4 422.5,609.4 429.5,609.4 436.5,591.6 443.5,600.0 450.5,605.0 458.5,606.4 465.5,607.6 472.5,609.4 479.5,610.4 486.5,608.6 494.5,602.4 501.5,605.0 508.5,605.4 515.5,609.4 523.5,604.4 530.5,604.0 537.5,594.4 544.5,601.4 551.5,600.6 559.5,606.6 566.5,608.6 573.5,606.6 580.5,608.0 588.5,609.4 595.5,607.6 602.5,602.6 609.5,601.0 616.5,599.4 624.5,603.0 631.5,605.4 638.5,604.0 645.5,605.4 652.5,606.6 660.5,613.0 667.5,616.0 674.5,617.4 681.5,616.0 689.5,619.4 696.5,625.4 703.5,624.0 710.5,620.4 717.5,619.0 725.5,621.4 732.5,622.0 739.5,619.4 746.5,618.0 753.5,614.6 761.5,613.4 768.5,615.4 775.5,617.4 782.5,618.4 790.5,618.4 797.5,622.0 804.5,620.4 811.5,621.4 818.5,624.4 826.5,623.4 833.5,622.4 840.5,620.6 847.5,621.4 854.5,620.6 862.5,623.0 869.5,621.4 876.5,621.4 883.5,626.0 891.5,624.0 898.5,619.6 905.5,619.4 912.5,618.4 919.5,617.4 927.5,616.0 934.5,614.4 941.5,616.4 948.5,619.4 955.5,616.4 963.5,614.6 970.5,614.4 977.5,614.4"/>
<path shape-rendering="crispEdges" fill="#800000" d="M429 382h11l2 2v11h-13z"/>
<path shape-rendering="crispEdges" fill="#003878" d="M920 382h11l2 2v11h-13z"/>
<path shape-rendering="crispEdges" fill="#008080" d="M956 382h11l2 2v12h-13z"/>
<text x="435.5" y="393" text-anchor="middle" style="font-size:11px;fill:#fff">涨</text>
<text x="926.5" y="393" text-anchor="middle" style="font-size:11px;fill:#fff">财</text>
<text x="962.5" y="393" text-anchor="middle" style="font-size:11px;fill:#fff">解</text>
<text class="cj" x="28" y="14">分时</text>
<text class="cj" x="61" y="14">1分钟</text>
<text class="cj" x="100" y="14">5分钟</text>
<text class="cj" x="140" y="14">15分钟</text>
<text class="cj" x="186" y="14">30分钟</text>
<text class="cj" x="231" y="14">60分钟</text>
<text class="cj" x="277.3" y="14" style="fill:#54ffff">日线</text>
<text class="cj" transform="translate(449.8,15.4) scale(1.05,1.6)">&gt;</text>
<text class="cj" x="312" y="14">周线</text>
<text class="cj" x="346" y="14">月线</text>
<text class="cj" x="378" y="14">多周期</text>
<text class="cj" x="423" y="14">更多</text>
<text class="cj" x="815.5" y="14">复权</text>
<text class="cj" x="850" y="14">叠加</text>
<text class="cj" x="885" y="14">多股</text>
<text class="cj" x="919.2" y="14">统计</text>
<text class="cj" x="955" y="14">画线</text>
<text class="cj" x="992" y="14">F10</text>
<text class="cj" x="1025" y="14">标记</text>
<text class="cj" x="1057.3" y="14">+自选</text>
<text class="cj" x="1095" y="14">返回</text>
<rect x="5.5" y="3.5" width="11" height="10" rx="2.5" fill="none" stroke="#808080"/>
<rect x="12" y="5" width="3" height="7" fill="#909090"/>
<text class="cj" x="3" y="34">云鼎科技(日线.前复权)</text>
<circle cx="134" cy="29" r="6" fill="#808080"/><path d="M131 28l3 2.8l3-2.8" fill="none" stroke="#000" stroke-width="1.1"/>
<path d="M1047.5 24l5.5 5.5l-5.5 5.5l-5.5-5.5z" fill="none" stroke="#808080"/>
<rect x="1060.5" y="24.5" width="11" height="10" rx="2.5" fill="none" stroke="#808080"/>
<rect x="1067" y="26" width="3" height="7" fill="#909090"/>
<text class="cj" x="675" y="50">13.75</text>
<path d="M661 40.5l11 4M661 40.5l4 -1.5M661 40.5l3 3.5" stroke="#c0c0c0" fill="none"/>
<text class="cj" x="17" y="382.8">10.63</text>
<path d="M3 377.5h12M3 377.5l4-3M3 377.5l4 3" stroke="#c0c0c0" fill="none"/>
<text class="ax" x="1120.3" y="71.5" text-anchor="end">13.50</text>
<text class="ax" x="1120.3" y="97.5" text-anchor="end">13.25</text>
<text class="ax" x="1120.3" y="125.5" text-anchor="end">13.00</text>
<text class="ax" x="1120.3" y="151.5" text-anchor="end">12.75</text>
<text class="ax" x="1120.3" y="179.5" text-anchor="end">12.50</text>
<text class="ax" x="1120.3" y="205.5" text-anchor="end">12.25</text>
<text class="ax" x="1120.3" y="233.5" text-anchor="end">12.00</text>
<text class="ax" x="1120.3" y="259.5" text-anchor="end">11.75</text>
<text class="ax" x="1120.3" y="287.5" text-anchor="end">11.50</text>
<text class="ax" x="1120.3" y="313.5" text-anchor="end">11.25</text>
<text class="ax" x="1120.3" y="341.5" text-anchor="end">11.00</text>
<text class="ax" x="1120.3" y="419.9" text-anchor="end">100.0</text>
<text class="ax" x="1120.3" y="457.9" text-anchor="end">80.00</text>
<text class="ax" x="1120.3" y="496.9" text-anchor="end">60.00</text>
<text class="ax" x="1120.3" y="534.9" text-anchor="end">40.00</text>
<text class="ax" x="1120.3" y="573.9" text-anchor="end">20.00</text>
<circle cx="8" cy="405" r="6" fill="#808080"/><path d="M5 404l3 2.8l3-2.8" fill="none" stroke="#000" stroke-width="1.1"/>
<text class="cj" x="18" y="410">股朋指标网</text>
<text class="cj" x="82" y="410" style="fill:#ff0000">获利盘: 68.99</text>
<text class="cj" x="160" y="410" style="fill:#ffff00">获利盘20: 68.99</text>
<text class="cj" x="252" y="410" style="fill:#ff00ff">挖坑线: 99.09</text>
<text class="cj" x="330" y="410" style="fill:#00ff00">成本乖离: 3.27</text>
<text class="ax" x="3" y="642.8">2025年</text>
<text class="ax" x="83" y="642.8">5</text>
<text class="ax" x="221" y="642.8">6</text>
<text class="ax" x="365" y="642.8">7</text>
<text class="ax" x="531" y="642.8">8</text>
<text class="ax" x="682" y="642.8">9</text>
<text class="ax" x="840" y="642.8">10</text>
<text class="ax" x="964" y="642.8">11</text>
<rect x="978" y="600" width="152" height="50" fill="#000"/>
<text class="wm" x="998.5" y="626.3" style="font-size:18px" textLength="102.5" lengthAdjust="spacingAndGlyphs">乐淘公式网</text>
<text class="wm" x="1001" y="643.8" style="font-size:15px" textLength="89.5" lengthAdjust="spacingAndGlyphs">www.60lt.com</text>
</svg>
</body></html>
